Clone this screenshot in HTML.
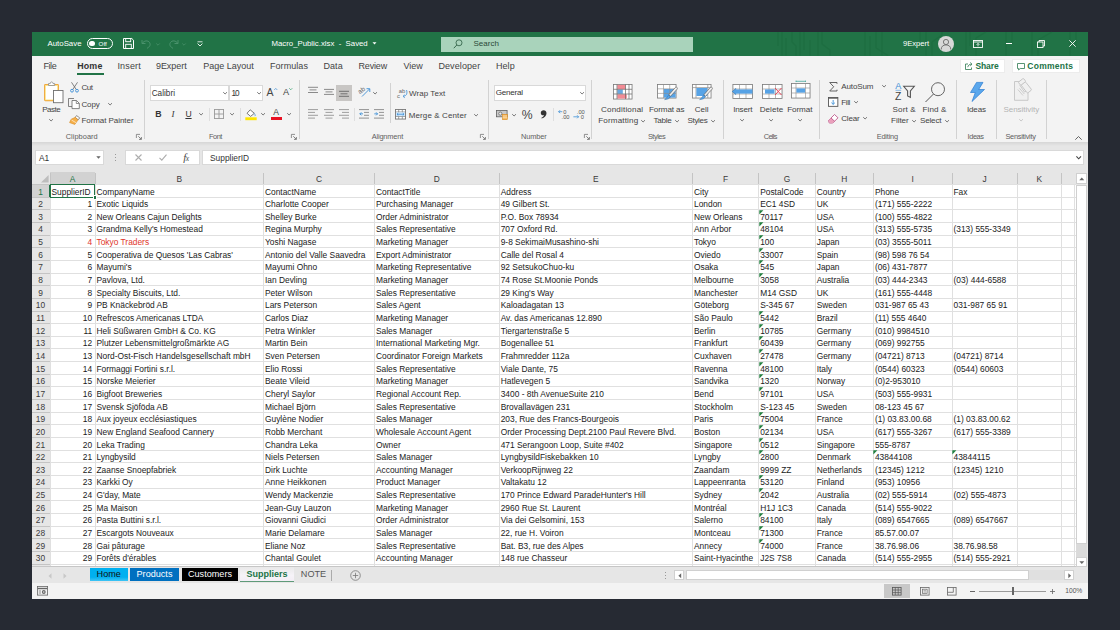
<!DOCTYPE html>
<html><head><meta charset="utf-8">
<style>
*{margin:0;padding:0}
html,body{width:1120px;height:630px;overflow:hidden;background:#262a33;font-family:"Liberation Sans",sans-serif;}
.abs{position:absolute}
.t{position:absolute;white-space:nowrap;color:#444;font-size:8px;line-height:10px;height:10px;transform:translateY(-5px)}
.tc{position:absolute;white-space:nowrap;color:#444;font-size:8px;line-height:10px;height:10px;text-align:center;transform:translate(-50%,-5px)}
.c{white-space:nowrap;color:#1a1a1a;font-size:8.4px}
.ch{text-align:center;font-size:8.4px;line-height:14.4px;color:#444}
.rh{text-align:center;font-size:8.4px;color:#444}
.sep{position:absolute;width:1px;background:#d4d4d4;top:84px;height:56px}
.lbl{position:absolute;white-space:nowrap;color:#5e5e5e;font-size:7.6px;line-height:10px;height:10px;text-align:center;transform:translate(-50%,-5px);top:137.3px}
.tab{position:absolute;white-space:nowrap;color:#444;font-size:9.1px;line-height:12px;height:12px;top:60px}
.box{position:absolute;background:#fff;border:0.6px solid #d9d9d9;box-sizing:border-box}
svg{position:absolute;overflow:visible}
</style></head><body>
<!-- window -->
<div class="abs" style="left:32px;top:32px;width:1056px;height:566.5px;background:#f3f3f3"></div>
<!-- title bar -->
<div class="abs" id="title" style="left:32px;top:32px;width:1056px;height:23.5px;background:#217346"></div>
<svg style="left:770px;top:32px" width="318" height="23.5" viewBox="0 0 318 23.5" id="circ"><g stroke="#1b6a3d" stroke-width="1.2" fill="none" opacity="0.5"><path d="M8 0V14"/><path d="M12 0V23.5"/><path d="M16 6V23.5"/><path d="M22 0V10"/><path d="M30 0V23.5"/><path d="M34 0V18"/><path d="M40 8V23.5"/><path d="M48 0V23.5"/><path d="M52 0V12"/><path d="M95 0V23.5"/><path d="M100 4V23.5"/><path d="M106 0V16"/><path d="M112 0V23.5"/><path d="M150 0V9"/><path d="M156 0V23.5"/><path d="M162 10V23.5"/><path d="M196 0V23.5"/><path d="M200 0V14"/><path d="M206 6V23.5"/><path d="M236 0V23.5"/><path d="M242 0V12"/><path d="M262 0V23.5"/><path d="M268 8V23.5"/><path d="M300 0V23.5"/><path d="M306 0V15"/><path d="M52 12L60 18V23.5M106 16L118 23.5M162 10L172 3V0M206 6L216 0M268 8L282 0M22 10L26 14V23.5"/></g></svg>
<div class="t" style="left:47.5px;top:43.7px;color:#fff;font-size:7.85px">AutoSave</div>
<div class="abs" style="left:86.5px;top:38px;width:26.5px;height:11px;border:0.8px solid #fff;border-radius:6px;box-sizing:border-box"></div>
<div class="abs" style="left:89.3px;top:40.7px;width:5.6px;height:5.6px;border-radius:3px;background:#fff"></div>
<div class="t" style="left:98.6px;top:43.7px;color:#fff;font-size:6.2px">Off</div>
<!-- save icon -->
<svg style="left:122.5px;top:38px" width="11" height="11" viewBox="0 0 11 11"><path d="M0.5 0.5h8.3l1.7 1.7v8.3h-10z" fill="none" stroke="#fff" stroke-width="1"/><rect x="2.7" y="0.5" width="5" height="3.2" fill="none" stroke="#fff" stroke-width="0.9"/><rect x="2.7" y="6.3" width="5.6" height="4.2" fill="none" stroke="#fff" stroke-width="0.9"/></svg>
<!-- undo/redo (dim) -->
<svg style="left:141px;top:38.5px" width="12" height="10" viewBox="0 0 12 10"><path d="M1 1v3.5h3.5M1.3 4.3C3 1.5 7 1 8.6 3.6 10 6 8.5 8 6 9.3" fill="none" stroke="#4f9570" stroke-width="0.9"/></svg>
<svg style="left:155.5px;top:42.5px" width="4" height="3" viewBox="0 0 4 3"><path d="M0.3 0.5L2 2.2 3.7 0.5" fill="none" stroke="#4f9570" stroke-width="0.7"/></svg>
<svg style="left:167px;top:38.5px" width="12" height="10" viewBox="0 0 12 10"><path d="M11 1v3.5H7.5M10.7 4.3C9 1.5 5 1 3.4 3.6 2 6 3.5 8 6 9.3" fill="none" stroke="#4f9570" stroke-width="0.9"/></svg>
<svg style="left:181.5px;top:42.5px" width="4" height="3" viewBox="0 0 4 3"><path d="M0.3 0.5L2 2.2 3.7 0.5" fill="none" stroke="#4f9570" stroke-width="0.7"/></svg>
<svg style="left:196.5px;top:41px" width="6" height="6" viewBox="0 0 6 6"><path d="M0.5 0.8h5" stroke="#fff" stroke-width="0.8"/><path d="M0.6 2.6L3 5 5.4 2.6" fill="none" stroke="#fff" stroke-width="0.9"/></svg>
<div class="t" style="left:271.5px;top:43.8px;color:#fff;font-size:7.8px">Macro_Public.xlsx&nbsp; -&nbsp; Saved</div>
<svg style="left:371.5px;top:42.2px" width="5" height="3" viewBox="0 0 5 3"><path d="M0.5 0.3h4L2.5 2.6z" fill="#fff"/></svg>
<!-- search -->
<div class="abs" style="left:440.5px;top:36.5px;width:252px;height:15px;background:#a9d3bb"></div>
<svg style="left:453px;top:38.5px" width="10" height="10" viewBox="0 0 10 10"><circle cx="6" cy="3.8" r="3" fill="none" stroke="#2b5c41" stroke-width="0.8"/><path d="M3.8 6L0.8 9.2" stroke="#2b5c41" stroke-width="0.9"/></svg>
<div class="t" style="left:473.5px;top:43.7px;color:#2b4a39;font-size:8px">Search</div>
<div class="t" style="left:903px;top:43.7px;color:#fff;font-size:7.6px">9Expert</div>
<div class="abs" style="left:938px;top:35.5px;width:16px;height:16px;border-radius:8px;background:#d8d8d8;overflow:hidden"></div>
<svg style="left:938px;top:35.5px" width="16" height="16" viewBox="0 0 16 16"><circle cx="8" cy="6" r="2.6" fill="none" stroke="#6b6b6b" stroke-width="0.9"/><path d="M3.2 13.5c0-3 2-4.6 4.8-4.6s4.8 1.600 4.8 4.600" fill="none" stroke="#6b6b6b" stroke-width="0.9"/></svg>
<svg style="left:972.5px;top:39.5px" width="10" height="8" viewBox="0 0 10 8"><rect x="0.5" y="0.5" width="9" height="7" fill="none" stroke="#fff" stroke-width="0.9"/><path d="M0.5 2h9" stroke="#fff" stroke-width="0.9"/><path d="M5 6.300V3.600M3.600 4.800L5 3.400 6.400 4.800" fill="none" stroke="#fff" stroke-width="0.8"/></svg>
<div class="abs" style="left:1006px;top:43.4px;width:6px;height:0.9px;background:#fff"></div>
<svg style="left:1036.5px;top:40px" width="8" height="8" viewBox="0 0 8 8"><rect x="0.5" y="2" width="5.5" height="5.5" fill="none" stroke="#fff" stroke-width="0.9"/><path d="M2 2V0.500h5.500v5.500H6" fill="none" stroke="#fff" stroke-width="0.9"/></svg>
<svg style="left:1068.5px;top:40px" width="7" height="7" viewBox="0 0 7 7"><path d="M0.300 0.300L6.700 6.700M6.700 0.300L0.300 6.700" stroke="#fff" stroke-width="0.9"/></svg>

<!-- tab row -->
<div class="tab" style="left:43.45px;font-size:9.0px;letter-spacing:-0.418px;">File</div>
<div class="tab" style="left:77.20px;font-size:8.9px;letter-spacing:0.174px;font-weight:bold;color:#333;">Home</div>
<div class="tab" style="left:117.45px;font-size:9.0px;letter-spacing:0.148px;">Insert</div>
<div class="tab" style="left:155.95px;font-size:9.0px;letter-spacing:-0.045px;">9Expert</div>
<div class="tab" style="left:203.20px;font-size:9.0px;letter-spacing:-0.004px;">Page Layout</div>
<div class="tab" style="left:269.95px;font-size:9.0px;letter-spacing:0.070px;">Formulas</div>
<div class="tab" style="left:323.45px;font-size:9.0px;letter-spacing:0.080px;">Data</div>
<div class="tab" style="left:358.45px;font-size:9.0px;letter-spacing:-0.152px;">Review</div>
<div class="tab" style="left:403.45px;font-size:9.0px;letter-spacing:-0.032px;">View</div>
<div class="tab" style="left:438.45px;font-size:9.0px;letter-spacing:0.091px;">Developer</div>
<div class="tab" style="left:495.95px;font-size:9.0px;letter-spacing:0.080px;">Help</div>
<div class="abs" style="left:77px;top:73.2px;width:26.7px;height:1.8px;background:#217346"></div>
<div class="abs" style="left:960px;top:59px;width:45px;height:14px;background:#fff;border:0.500px solid #ececec;box-sizing:border-box"></div>
<svg style="left:964.500px;top:62px" width="8" height="8" viewBox="0 0 8 8"><path d="M3 2H0.500v5.500h6V5.500" fill="none" stroke="#2d7a50" stroke-width="0.800"/><path d="M2.800 5.200C3 3.200 4.500 2.200 6.800 2.200M5.200 0.500L7 2.200 5.200 3.900" fill="none" stroke="#2d7a50" stroke-width="0.800"/></svg>
<div class="tab" style="left:975.4px;top:60.2px;font-size:8.5px;font-weight:bold;color:#217346;letter-spacing:-0.081px">Share</div>
<div class="abs" style="left:1011.500px;top:59px;width:68px;height:14px;background:#fff;border:0.500px solid #ececec;box-sizing:border-box"></div>
<svg style="left:1016.500px;top:62.500px" width="8" height="8" viewBox="0 0 8 8"><path d="M0.500 0.500h7v5H3.200L1.600 7V5.500H0.500z" fill="none" stroke="#2d7a50" stroke-width="0.800"/></svg>
<div class="tab" style="left:1027.3px;top:60.2px;font-size:8.5px;font-weight:bold;color:#217346;letter-spacing:0.268px">Comments</div>

<svg style="left:44px;top:80.5px" width="20" height="22.5" viewBox="0 0 20 22.5">
<rect x="0.6" y="3.6" width="13.8" height="16" rx="0.8" fill="#fff" stroke="#f0a53a" stroke-width="1.1"/>
<rect x="1.3" y="4.3" width="12.4" height="14.6" fill="none" stroke="#fbe27a" stroke-width="0.7"/>
<path d="M4.5 4.5V2.6h1.7c0-2.2 2.800-2.200 2.800 0h1.700v1.900z" fill="#fff" stroke="#8a8a8a" stroke-width="0.8"/>
<rect x="9.5" y="9.5" width="9.5" height="12.200" fill="#fff" stroke="#707070" stroke-width="0.9"/>
</svg>
<div class="t" style="left:42.30px;top:109.6px;font-size:8.0px;color:#444;letter-spacing:-0.514px;">Paste</div>
<svg style="left:49.30px;top:118.70px" width="4.2" height="2.2" viewBox="0 0 4.2 2.2"><path d="M0.2 0.2L2.1 2.0 4.0 0.2" fill="none" stroke="#555" stroke-width="0.8"/></svg>
<svg style="left:69.500px;top:82px" width="9" height="10.500" viewBox="0 0 9 10.500">
<path d="M1.500 0.300L6.300 7.600M7.500 0.300L2.700 7.600" stroke="#666" stroke-width="0.800" fill="none"/>
<circle cx="2" cy="8.700" r="1.400" fill="none" stroke="#3c8fd6" stroke-width="0.900"/><circle cx="7" cy="8.700" r="1.400" fill="none" stroke="#3c8fd6" stroke-width="0.900"/></svg>
<div class="t" style="left:81.45px;top:87.6px;font-size:8.0px;color:#444;letter-spacing:-0.475px;">Cut</div>
<svg style="left:68px;top:98px" width="12" height="11" viewBox="0 0 12 11">
<path d="M4 8.500H0.500V0.500h5.500" fill="none" stroke="#666" stroke-width="0.800"/>
<path d="M4 2.500h4.500l2.800 2.800v5.300H4z" fill="#fff" stroke="#666" stroke-width="0.800"/>
<path d="M8.300 2.700v2.800h2.800" fill="none" stroke="#666" stroke-width="0.700"/></svg>
<div class="t" style="left:81.45px;top:104.7px;font-size:8.0px;color:#444;letter-spacing:-0.142px;">Copy</div>
<svg style="left:107.70px;top:103.10px" width="4.2" height="2.2" viewBox="0 0 4.2 2.2"><path d="M0.2 0.2L2.1 2.0 4.0 0.2" fill="none" stroke="#555" stroke-width="0.8"/></svg>
<svg style="left:68.500px;top:114.500px" width="11.500" height="10" viewBox="0 0 11.500 10">
<path d="M7.500 0.600l3.200 2.200-1.400 2-3.200-2.200z" fill="#fff" stroke="#666" stroke-width="0.700"/>
<path d="M6.500 2.300L2.200 4.200 0.600 7.600l5.200 1.800 2-2.800 1-1.700z" fill="#f5b04a" stroke="#d98a1f" stroke-width="0.600"/>
<path d="M2.500 5l4.500 2.700" stroke="#fff" stroke-width="0.600"/></svg>
<div class="t" style="left:81.45px;top:121.1px;font-size:8.0px;color:#444;letter-spacing:-0.058px;">Format Painter</div>
<div class="t" style="left:65.70px;top:137.3px;font-size:7.4px;color:#5e5e5e;letter-spacing:0.041px">Clipboard</div>
<svg style="left:136.3px;top:134px" width="6" height="6" viewBox="0 0 6 6"><path d="M0.4 4V0.4H4" fill="none" stroke="#666" stroke-width="0.7"/><path d="M2.3 2.3L5.2 5.2M5.4 3V5.4H3" fill="none" stroke="#666" stroke-width="0.8"/></svg>
<div class="abs" style="left:144.0px;top:80px;width:1px;height:58.5px;background:#d2d2d2"></div>
<div class="box" style="left:150.2px;top:85.2px;width:79px;height:15.500px"></div>
<div class="box" style="left:229.4px;top:85.2px;width:34px;height:15.500px"></div>
<div class="t" style="left:151.70px;top:93.7px;font-size:8.2px;color:#333;letter-spacing:0.010px;">Calibri</div>
<svg style="left:222.80px;top:92.20px" width="4.2" height="2.2" viewBox="0 0 4.2 2.2"><path d="M0.2 0.2L2.1 2.0 4.0 0.2" fill="none" stroke="#555" stroke-width="0.8"/></svg>
<div class="t" style="left:231.40px;top:93.7px;font-size:8.2px;color:#333;letter-spacing:-0.921px;">10</div>
<svg style="left:256.80px;top:92.20px" width="4.2" height="2.2" viewBox="0 0 4.2 2.2"><path d="M0.2 0.2L2.1 2.0 4.0 0.2" fill="none" stroke="#555" stroke-width="0.8"/></svg>
<div class="t" style="left:266.5px;top:91.8px;font-size:10.5px;color:#444;">A</div>
<svg style="left:273.5px;top:87.5px" width="3.5" height="2.2" viewBox="0 0 3.5 2.2"><path d="M0.2 2L1.750 0.400 3.300 2" fill="none" stroke="#3c8fd6" stroke-width="0.700"/></svg>
<div class="t" style="left:283px;top:92.3px;font-size:9.2px;color:#444;">A</div>
<svg style="left:289px;top:87.5px" width="3.5" height="2.2" viewBox="0 0 3.5 2.2"><path d="M0.2 0.200L1.750 1.800 3.300 0.200" fill="none" stroke="#2e9e6b" stroke-width="0.700"/></svg>
<div class="t" style="left:155.2px;top:114.1px;font-size:8.8px;color:#333;font-weight:bold">B</div>
<div class="t" style="left:171.6px;top:114.1px;font-size:9px;color:#333;font-family:'Liberation Serif',serif;font-style:italic;">I</div>
<div class="t" style="left:185.4px;top:113.9px;font-size:8.6px;color:#333;text-decoration:underline;text-underline-offset:1.2px;text-decoration-thickness:0.700px">U</div>
<svg style="left:198.90px;top:113.20px" width="4.2" height="2.2" viewBox="0 0 4.2 2.2"><path d="M0.2 0.2L2.1 2.0 4.0 0.2" fill="none" stroke="#555" stroke-width="0.8"/></svg>
<div class="abs" style="left:208.8px;top:108px;width:1px;height:13px;background:#dedede"></div>
<svg style="left:214.300px;top:109px" width="10" height="10" viewBox="0 0 10 10"><rect x="0.450" y="0.450" width="9.100" height="9.100" fill="none" stroke="#9a9a9a" stroke-width="0.900"/><path d="M5 0.500V9.500M0.500 5H9.500" stroke="#9a9a9a" stroke-width="0.900"/></svg>
<svg style="left:229.60px;top:113.20px" width="4.2" height="2.2" viewBox="0 0 4.2 2.2"><path d="M0.2 0.2L2.1 2.0 4.0 0.2" fill="none" stroke="#555" stroke-width="0.8"/></svg>
<div class="abs" style="left:239.8px;top:108px;width:1px;height:13px;background:#dedede"></div>
<svg style="left:244.500px;top:108.500px" width="12" height="11.500" viewBox="0 0 12 11.500">
<path d="M5.200 0.800L9.300 4.300 5.600 7.400 2 4.300z" fill="#fff" stroke="#555" stroke-width="0.800"/>
<path d="M9.300 4.500c0.900 1.200 1.200 2 0.600 2.600" fill="none" stroke="#3c8fd6" stroke-width="0.800"/>
<rect x="0.300" y="8.300" width="11.400" height="2.900" fill="#ffe600"/></svg>
<svg style="left:260.60px;top:113.20px" width="4.2" height="2.2" viewBox="0 0 4.2 2.2"><path d="M0.2 0.2L2.1 2.0 4.0 0.2" fill="none" stroke="#555" stroke-width="0.8"/></svg>
<div class="tc" style="left:276.2px;top:112.3px;font-size:8.6px;color:#444;">A</div>
<div class="abs" style="left:270.700px;top:116.800px;width:11px;height:2.900px;background:#e81123"></div>
<svg style="left:286.50px;top:113.20px" width="4.2" height="2.2" viewBox="0 0 4.2 2.2"><path d="M0.2 0.2L2.1 2.0 4.0 0.2" fill="none" stroke="#555" stroke-width="0.8"/></svg>
<div class="t" style="left:209.00px;top:137.3px;font-size:7.4px;color:#5e5e5e;letter-spacing:-0.469px">Font</div>
<svg style="left:291.3px;top:134px" width="6" height="6" viewBox="0 0 6 6"><path d="M0.4 4V0.4H4" fill="none" stroke="#666" stroke-width="0.7"/><path d="M2.3 2.3L5.2 5.2M5.4 3V5.4H3" fill="none" stroke="#666" stroke-width="0.8"/></svg>
<div class="abs" style="left:299.1px;top:80px;width:1px;height:58.5px;background:#d2d2d2"></div>
<svg style="left:308px;top:85px" width="10" height="12" viewBox="0 0 10 12"><path d="M0 2.3H10" stroke="#6e6e6e" stroke-width="0.8"/><path d="M1.5 4.9H8.5" stroke="#6e6e6e" stroke-width="0.8"/><path d="M0 7.5H10" stroke="#6e6e6e" stroke-width="0.8"/></svg>
<svg style="left:323.7px;top:85px" width="10" height="12" viewBox="0 0 10 12"><path d="M0 4.4H10" stroke="#6e6e6e" stroke-width="0.8"/><path d="M1.5 6.9H8.5" stroke="#6e6e6e" stroke-width="0.8"/><path d="M0 9.4H10" stroke="#6e6e6e" stroke-width="0.8"/></svg>
<div class="abs" style="left:336.200px;top:85px;width:15.600px;height:15.600px;background:#c8c6c4"></div>
<svg style="left:339px;top:85px" width="10" height="12" viewBox="0 0 10 12"><path d="M0 6.3H10" stroke="#5a5a5a" stroke-width="0.8"/><path d="M1.5 8.8H8.5" stroke="#5a5a5a" stroke-width="0.8"/><path d="M0 11.3H10" stroke="#5a5a5a" stroke-width="0.8"/></svg>
<svg style="left:359px;top:86px" width="11.500" height="11" viewBox="0 0 11.500 11">
<text x="0" y="6.500" font-size="6.500" fill="#666" font-family="Liberation Sans" transform="rotate(-35 3 6)">ab</text>
<path d="M3 10.500L10.500 3M10.800 6V2.700H7.500" fill="none" stroke="#3c8fd6" stroke-width="0.900"/></svg>
<svg style="left:372.90px;top:92.20px" width="4.2" height="2.2" viewBox="0 0 4.2 2.2"><path d="M0.2 0.2L2.1 2.0 4.0 0.2" fill="none" stroke="#555" stroke-width="0.8"/></svg>
<div class="abs" style="left:390.2px;top:83px;width:1px;height:40px;background:#d2d2d2"></div>
<svg style="left:397px;top:87.500px" width="10.500" height="11" viewBox="0 0 10.500 11">
<text x="1.800" y="4.800" font-size="5.800" fill="#666" font-family="Liberation Sans">ab</text>
<text x="0" y="10.300" font-size="5.800" fill="#666" font-family="Liberation Sans">c</text>
<path d="M8.800 1v0M9.500 2c1 2.500 0.500 6-3 6.200M7.800 6.800L6 8.300 7.800 9.800" fill="none" stroke="#3c8fd6" stroke-width="0.800"/></svg>
<div class="t" style="left:409.00px;top:93.7px;font-size:8.0px;color:#444;letter-spacing:0.060px;">Wrap Text</div>
<svg style="left:308px;top:106.9px" width="10" height="12" viewBox="0 0 10 12"><path d="M0 2.6H10" stroke="#888" stroke-width="0.8"/><path d="M0 5.4H7" stroke="#888" stroke-width="0.8"/><path d="M0 8.3H10" stroke="#888" stroke-width="0.8"/><path d="M0 11.1H7" stroke="#888" stroke-width="0.8"/></svg>
<svg style="left:323.7px;top:106.9px" width="10" height="12" viewBox="0 0 10 12"><path d="M0 2.6H10" stroke="#888" stroke-width="0.8"/><path d="M1.5 5.4H8.5" stroke="#888" stroke-width="0.8"/><path d="M0 8.3H10" stroke="#888" stroke-width="0.8"/><path d="M1.5 11.1H8.5" stroke="#888" stroke-width="0.8"/></svg>
<svg style="left:339px;top:106.9px" width="10" height="12" viewBox="0 0 10 12"><path d="M0 2.6H10" stroke="#888" stroke-width="0.8"/><path d="M3 5.4H10" stroke="#888" stroke-width="0.8"/><path d="M0 8.3H10" stroke="#888" stroke-width="0.8"/><path d="M3 11.1H10" stroke="#888" stroke-width="0.8"/></svg>
<div class="abs" style="left:353.5px;top:108px;width:1px;height:13px;background:#dedede"></div>
<svg style="left:359.300px;top:106.9px" width="10" height="12" viewBox="0 0 10 12"><path d="M0 2.600H10M5 5.400H10M5 8.300H10M0 11.100H10" stroke="#888" stroke-width="0.900"/><path d="M4 6.85H0.800M2.300 5.35L0.800 6.85 2.300 8.35" fill="none" stroke="#3c8fd6" stroke-width="0.900"/></svg>
<svg style="left:374.300px;top:106.9px" width="10" height="12" viewBox="0 0 10 12"><path d="M0 2.600H10M5 5.400H10M5 8.300H10M0 11.100H10" stroke="#888" stroke-width="0.900"/><path d="M0.300 6.85H3.600M2.100 5.35L3.600 6.85 2.100 8.35" fill="none" stroke="#3c8fd6" stroke-width="0.900"/></svg>
<svg style="left:395px;top:109px" width="11" height="10.500" viewBox="0 0 11 10.500">
<rect x="0.450" y="0.450" width="10.100" height="9.600" fill="#fff" stroke="#777" stroke-width="0.900"/>
<path d="M0.500 3H10.500M0.500 7.500H10.500M3.700 0.500V3M7.300 0.500V3M3.700 7.500V10M7.300 7.500V10" stroke="#777" stroke-width="0.700"/>
<rect x="1" y="3.400" width="9" height="3.700" fill="#cfe6fa"/>
<path d="M2 5.250H9M3.300 4L2 5.250 3.300 6.500M7.700 4L9 5.250 7.700 6.500" fill="none" stroke="#3c8fd6" stroke-width="0.800"/></svg>
<div class="t" style="left:408.70px;top:116px;font-size:8.0px;color:#444;letter-spacing:0.118px;">Merge &amp; Center</div>
<svg style="left:474.30px;top:114.10px" width="4.2" height="2.2" viewBox="0 0 4.2 2.2"><path d="M0.2 0.2L2.1 2.0 4.0 0.2" fill="none" stroke="#555" stroke-width="0.8"/></svg>
<div class="t" style="left:371.70px;top:137.3px;font-size:7.4px;color:#5e5e5e;letter-spacing:-0.163px">Alignment</div>
<svg style="left:480.4px;top:134px" width="6" height="6" viewBox="0 0 6 6"><path d="M0.4 4V0.4H4" fill="none" stroke="#666" stroke-width="0.7"/><path d="M2.3 2.3L5.2 5.2M5.4 3V5.4H3" fill="none" stroke="#666" stroke-width="0.8"/></svg>
<div class="abs" style="left:487.9px;top:80px;width:1px;height:58.5px;background:#d2d2d2"></div>
<div class="box" style="left:494px;top:85.4px;width:92px;height:15.200px"></div>
<div class="t" style="left:495.70px;top:93.3px;font-size:8.1px;color:#333;letter-spacing:-0.220px;">General</div>
<svg style="left:579.90px;top:92.20px" width="4.2" height="2.2" viewBox="0 0 4.2 2.2"><path d="M0.2 0.2L2.1 2.0 4.0 0.2" fill="none" stroke="#555" stroke-width="0.8"/></svg>
<svg style="left:496px;top:110.300px" width="11.500" height="10" viewBox="0 0 11.500 10">
<rect x="0.400" y="0.400" width="10.700" height="6.400" fill="#c9c9c9" stroke="#606060" stroke-width="0.800"/>
<circle cx="4.300" cy="3.600" r="1.600" fill="#e8e8e8" stroke="#606060" stroke-width="0.700"/>
<rect x="6.300" y="4.300" width="5" height="5.300" fill="#f5b04a" stroke="#d98a1f" stroke-width="0.600"/>
<path d="M6.600 6H11M6.600 7.800H11" stroke="#fff" stroke-width="0.600"/></svg>
<svg style="left:511.80px;top:114.10px" width="4.2" height="2.2" viewBox="0 0 4.2 2.2"><path d="M0.2 0.2L2.1 2.0 4.0 0.2" fill="none" stroke="#555" stroke-width="0.8"/></svg>
<div class="t" style="left:521.8px;top:114.6px;font-size:12.2px;color:#444;">%</div>
<svg style="left:540px;top:110.3px" width="7" height="9" viewBox="0 0 7 9"><path d="M3.6 0.3c1.700 0 2.900 1.300 2.900 3 0 2.600-2 4.600-4.800 5.300l-0.300-0.800c1.500-0.600 2.500-1.500 2.700-2.700-0.300 0.100-0.600 0.200-1 0.200-1.300 0-2.300-1-2.300-2.400 0-1.500 1.200-2.600 2.800-2.600z" fill="#333"/></svg>
<div class="abs" style="left:552.5px;top:108px;width:1px;height:13px;background:#dedede"></div>
<svg style="left:557.800px;top:109px" width="11" height="11" viewBox="0 0 11 11">
<text x="5.300" y="4.600" font-size="5.700" fill="#555" font-family="Liberation Sans">0</text>
<text x="3.600" y="10.200" font-size="5.700" fill="#555" font-family="Liberation Sans">.00</text>
<path d="M4.300 2.700H0.600M2.100 1.200L0.600 2.700 2.100 4.200" fill="none" stroke="#3c8fd6" stroke-width="0.800"/></svg>
<svg style="left:572.800px;top:109px" width="11.500" height="11" viewBox="0 0 11.500 11">
<text x="3.800" y="4.600" font-size="5.700" fill="#555" font-family="Liberation Sans">.00</text>
<text x="7.800" y="10.200" font-size="5.700" fill="#555" font-family="Liberation Sans">0</text>
<path d="M0.400 7.800H5.600M4.100 6.300L5.600 7.800 4.100 9.300" fill="none" stroke="#3c8fd6" stroke-width="0.800"/></svg>
<div class="t" style="left:521.10px;top:137.3px;font-size:7.4px;color:#5e5e5e;letter-spacing:-0.144px">Number</div>
<svg style="left:583.6px;top:134px" width="6" height="6" viewBox="0 0 6 6"><path d="M0.4 4V0.4H4" fill="none" stroke="#666" stroke-width="0.7"/><path d="M2.3 2.3L5.2 5.2M5.4 3V5.4H3" fill="none" stroke="#666" stroke-width="0.8"/></svg>
<div class="abs" style="left:591.1px;top:80px;width:1px;height:58.5px;background:#d2d2d2"></div>
<svg style="left:613px;top:83.500px" width="19.500" height="15.500" viewBox="0 0 19.500 15.500">
<rect x="0.450" y="0.450" width="18.600" height="14.600" fill="#fff" stroke="#787878" stroke-width="0.800"/>
<rect x="4.300" y="0.900" width="8.2" height="4.200" fill="#f28b94"/><rect x="4.300" y="5.600" width="5.500" height="4.200" fill="#6aa8e0"/><rect x="4.300" y="10.300" width="9.500" height="4.300" fill="#f28b94"/>
<path d="M0.500 5.300H19M0.500 10H19M4 0.500V15M12.500 0.500V15M16 0.500V15" stroke="#666" stroke-width="0.700"/></svg>
<div class="t" style="left:601.00px;top:109.5px;font-size:8.1px;color:#444;letter-spacing:0.167px;">Conditional</div>
<div class="t" style="left:598.20px;top:120.8px;font-size:8.1px;color:#444;letter-spacing:0.143px;">Formatting</div>
<svg style="left:640.90px;top:119.70px" width="4.2" height="2.2" viewBox="0 0 4.2 2.2"><path d="M0.2 0.2L2.1 2.0 4.0 0.2" fill="none" stroke="#555" stroke-width="0.8"/></svg>
<svg style="left:656.800px;top:83.500px" width="21" height="16.500" viewBox="0 0 21 16.500">
<rect x="0.450" y="0.450" width="18.600" height="13.600" fill="#fff" stroke="#787878" stroke-width="0.800"/>
<rect x="6.800" y="5" width="11.800" height="8.600" fill="#57a3e6"/>
<path d="M0.500 4.800H19M0.500 9.400H19M6.500 0.500V14M12.700 0.500V14" stroke="#8c8c8c" stroke-width="0.600"/>
<path d="M19.800 3.300c0.800 0.600 0.800 1.400 0.200 2l-6.500 7-1.700-1.400 6.300-7.200c0.500-0.600 1.100-0.800 1.700-0.400z" fill="#eee" stroke="#666" stroke-width="0.700"/>
<path d="M11.600 11.200l1.800 1.400c-0.800 2-3 3-5.800 3 1.600-0.800 2.400-2.600 4-4.400z" fill="#57a3e6" stroke="#2f6fa8" stroke-width="0.500"/></svg>
<div class="t" style="left:649.00px;top:109.7px;font-size:8.1px;color:#444;letter-spacing:-0.120px;">Format as</div>
<div class="t" style="left:653.50px;top:120.6px;font-size:8.1px;color:#444;letter-spacing:-0.291px;">Table</div>
<svg style="left:675.20px;top:119.70px" width="4.2" height="2.2" viewBox="0 0 4.2 2.2"><path d="M0.2 0.2L2.1 2.0 4.0 0.2" fill="none" stroke="#555" stroke-width="0.8"/></svg>
<svg style="left:692px;top:83.500px" width="21" height="16.500" viewBox="0 0 21 16.500">
<rect x="0.450" y="0.450" width="18.600" height="13.600" fill="#fff" stroke="#8a8a8a" stroke-width="0.900"/>
<path d="M0.500 3.600H19M4 0.500V14M15.800 0.500V14" stroke="#8a8a8a" stroke-width="0.700"/>
<rect x="4.400" y="4" width="11" height="8" fill="#57a3e6"/>
<path d="M19.800 3.300c0.800 0.600 0.800 1.400 0.200 2l-6.500 7-1.700-1.400 6.300-7.200c0.500-0.600 1.100-0.800 1.700-0.400z" fill="#eee" stroke="#666" stroke-width="0.700"/>
<path d="M11.600 11.200l1.800 1.400c-0.800 2-3 3-5.800 3 1.600-0.800 2.400-2.600 4-4.400z" fill="#57a3e6" stroke="#2f6fa8" stroke-width="0.500"/></svg>
<div class="t" style="left:694.70px;top:109.7px;font-size:8.1px;color:#444;letter-spacing:-0.051px;">Cell</div>
<div class="t" style="left:687.50px;top:120.6px;font-size:8.1px;color:#444;letter-spacing:-0.372px;">Styles</div>
<svg style="left:710.90px;top:119.70px" width="4.2" height="2.2" viewBox="0 0 4.2 2.2"><path d="M0.2 0.2L2.1 2.0 4.0 0.2" fill="none" stroke="#555" stroke-width="0.8"/></svg>
<div class="t" style="left:647.90px;top:137.3px;font-size:7.4px;color:#5e5e5e;letter-spacing:-0.470px">Styles</div>
<div class="abs" style="left:722.7px;top:80px;width:1px;height:58.5px;background:#d2d2d2"></div>
<svg style="left:732.400px;top:83.500px" width="21.500" height="15" viewBox="0 0 21.500 15">
<rect x="0.900" y="0.450" width="19.600" height="14.100" fill="#fff" stroke="#787878" stroke-width="0.800"/>
<path d="M1 5H20.500M1 10H20.500M7.500 0.500V14.500M14 0.500V14.500" stroke="#8c8c8c" stroke-width="0.600"/>
<rect x="3.500" y="5.400" width="17" height="4.200" fill="#57a3e6"/>
<path d="M0.200 7.500L4.200 4.300V10.700z" fill="#57a3e6"/><path d="M4 4.300L0.300 7.500 4 10.700" fill="none" stroke="#2f6fa8" stroke-width="0.600"/></svg>
<div class="t" style="left:733.20px;top:109.6px;font-size:8.1px;color:#444;letter-spacing:-0.192px;">Insert</div>
<svg style="left:740.40px;top:118.60px" width="4.2" height="2.2" viewBox="0 0 4.2 2.2"><path d="M0.2 0.2L2.1 2.0 4.0 0.2" fill="none" stroke="#555" stroke-width="0.8"/></svg>
<svg style="left:761.800px;top:83.500px" width="20.500" height="15" viewBox="0 0 20.500 15">
<rect x="0.450" y="0.450" width="19.600" height="14.100" fill="#fff" stroke="#787878" stroke-width="0.800"/>
<path d="M0.500 5H20M0.500 10H20M7 0.500V14.500M13.500 0.500V14.500" stroke="#8c8c8c" stroke-width="0.600"/>
<rect x="3" y="5.400" width="9.500" height="4.200" fill="#57a3e6"/>
<path d="M13 4L19.500 11M19.500 4L13 11" stroke="#e8475a" stroke-width="1"/></svg>
<div class="t" style="left:759.70px;top:109.6px;font-size:8.1px;color:#444;letter-spacing:0.037px;">Delete</div>
<svg style="left:769.30px;top:118.60px" width="4.2" height="2.2" viewBox="0 0 4.2 2.2"><path d="M0.2 0.2L2.1 2.0 4.0 0.2" fill="none" stroke="#555" stroke-width="0.8"/></svg>
<svg style="left:790.700px;top:80.300px" width="19.500" height="18.500" viewBox="0 0 19.500 18.500">
<path d="M5 1.300H14.500M5 0.600V2M14.500 0.600V2" stroke="#2e9e8f" stroke-width="0.700"/>
<rect x="0.450" y="3.450" width="18.600" height="14.600" fill="#fff" stroke="#787878" stroke-width="0.800"/>
<path d="M0.500 8H19M0.500 13H19M5 3.500V18M14.500 3.500V18" stroke="#8c8c8c" stroke-width="0.600"/>
<rect x="5.400" y="8.400" width="8.700" height="4.200" fill="#57a3e6"/></svg>
<div class="t" style="left:787.20px;top:109.6px;font-size:8.1px;color:#444;letter-spacing:-0.071px;">Format</div>
<svg style="left:797.90px;top:118.60px" width="4.2" height="2.2" viewBox="0 0 4.2 2.2"><path d="M0.2 0.2L2.1 2.0 4.0 0.2" fill="none" stroke="#555" stroke-width="0.8"/></svg>
<div class="t" style="left:763.70px;top:137.3px;font-size:7.4px;color:#5e5e5e;letter-spacing:-0.637px">Cells</div>
<div class="abs" style="left:819.1px;top:80px;width:1px;height:58.5px;background:#d2d2d2"></div>
<svg style="left:829px;top:81.500px" width="8.500" height="9.500" viewBox="0 0 8.500 9.500"><path d="M8 1.800V0.500H0.700L4.700 4.750 0.700 9H8V7.700" fill="none" stroke="#555" stroke-width="0.900"/></svg>
<div class="t" style="left:841.20px;top:86.8px;font-size:8px;color:#444;letter-spacing:-0.101px;">AutoSum</div>
<svg style="left:881.90px;top:85.30px" width="4.2" height="2.2" viewBox="0 0 4.2 2.2"><path d="M0.2 0.2L2.1 2.0 4.0 0.2" fill="none" stroke="#555" stroke-width="0.8"/></svg>
<svg style="left:828.300px;top:96.800px" width="10.300" height="9.800" viewBox="0 0 10.300 9.800"><rect x="0.450" y="0.450" width="9.400" height="8.900" fill="#fff" stroke="#555" stroke-width="0.900"/><path d="M0.500 1.200H9.800" stroke="#555" stroke-width="1"/><path d="M5.150 3V7.300M3.400 5.700L5.150 7.400 6.900 5.700" fill="none" stroke="#3c8fd6" stroke-width="0.900"/></svg>
<div class="t" style="left:841.20px;top:102.9px;font-size:8px;color:#444;letter-spacing:-0.340px;">Fill</div>
<svg style="left:853.90px;top:101.30px" width="4.2" height="2.2" viewBox="0 0 4.2 2.2"><path d="M0.2 0.2L2.1 2.0 4.0 0.2" fill="none" stroke="#555" stroke-width="0.8"/></svg>
<svg style="left:828.300px;top:113.500px" width="10.500" height="9.500" viewBox="0 0 10.500 9.500"><path d="M6.500 0.500L10 3.800 4.800 9 1.300 9 0.500 6.500z" fill="#fff" stroke="#b8457d" stroke-width="0.800"/><path d="M0.800 6.300L3.200 3.800 6.600 7.200 4.700 9H1.500z" fill="#eaa0bb"/><path d="M3 4L6.800 7.400" stroke="#b8457d" stroke-width="0.700"/></svg>
<div class="t" style="left:841.20px;top:119.2px;font-size:8px;color:#444;letter-spacing:-0.179px;">Clear</div>
<svg style="left:862.50px;top:117.30px" width="4.2" height="2.2" viewBox="0 0 4.2 2.2"><path d="M0.2 0.2L2.1 2.0 4.0 0.2" fill="none" stroke="#555" stroke-width="0.8"/></svg>
<svg style="left:894px;top:81px" width="21.500" height="20" viewBox="0 0 21.500 20">
<text x="1.200" y="8.300" font-size="9.200" fill="#3c8fd6" font-family="Liberation Sans">A</text>
<path d="M1.500 9.300H7.200" stroke="#3c8fd6" stroke-width="0.600"/>
<text x="1" y="19.500" font-size="11.500" fill="#444" font-family="Liberation Sans" transform="translate(0 0) scale(0.9 1)">Z</text>
<path d="M9.700 5.300H20.300L16.400 10V16.300L13.600 15V10z" fill="none" stroke="#555" stroke-width="1.100"/></svg>
<div class="t" style="left:892.60px;top:109.6px;font-size:8.1px;color:#444;letter-spacing:0.118px;">Sort &amp;</div>
<div class="t" style="left:891.10px;top:120.6px;font-size:8.1px;color:#444;letter-spacing:-0.080px;">Filter</div>
<svg style="left:911.80px;top:119.70px" width="4.2" height="2.2" viewBox="0 0 4.2 2.2"><path d="M0.2 0.2L2.1 2.0 4.0 0.2" fill="none" stroke="#555" stroke-width="0.8"/></svg>
<svg style="left:925px;top:81.500px" width="20.500" height="20.500" viewBox="0 0 20.500 20.500"><circle cx="13" cy="7.200" r="6.500" fill="none" stroke="#555" stroke-width="0.900"/><path d="M8.500 12L0.500 20" stroke="#555" stroke-width="1"/></svg>
<div class="t" style="left:922.60px;top:109.6px;font-size:8.1px;color:#444;letter-spacing:0.078px;">Find &amp;</div>
<div class="t" style="left:920.00px;top:120.6px;font-size:8.1px;color:#444;letter-spacing:-0.203px;">Select</div>
<svg style="left:944.60px;top:119.70px" width="4.2" height="2.2" viewBox="0 0 4.2 2.2"><path d="M0.2 0.2L2.1 2.0 4.0 0.2" fill="none" stroke="#555" stroke-width="0.8"/></svg>
<div class="t" style="left:876.70px;top:137.3px;font-size:7.4px;color:#5e5e5e;letter-spacing:-0.188px">Editing</div>
<div class="abs" style="left:956.0px;top:80px;width:1px;height:58.5px;background:#d2d2d2"></div>
<svg style="left:969.800px;top:81.500px" width="15" height="20" viewBox="0 0 15 20"><path d="M6.500 0.400H13L8.700 7.500H14.500L2 19.500 5.300 10.500H0.500z" fill="#5aa7ec" stroke="#2b7cd3" stroke-width="0.700"/></svg>
<div class="t" style="left:966.90px;top:109.6px;font-size:8.0px;color:#444;letter-spacing:-0.118px;">Ideas</div>
<div class="t" style="left:967.60px;top:137.3px;font-size:7.4px;color:#5e5e5e;letter-spacing:-0.426px">Ideas</div>
<div class="abs" style="left:996.2px;top:80px;width:1px;height:58.5px;background:#d2d2d2"></div>
<svg style="left:1013.800px;top:80.300px" width="18.500" height="21" viewBox="0 0 18.500 21"><path d="M0.500 1.500H8L6 5.500 10.500 12 14 10.300V20.300H0.500z" fill="#f0f0f0" stroke="#c4c4c4" stroke-width="0.900"/>
<g transform="rotate(-38 12 7)"><rect x="9.300" y="2.300" width="5.500" height="10.500" rx="1" fill="#f0f0f0" stroke="#c4c4c4" stroke-width="0.900"/><rect x="8.800" y="-1.500" width="6.500" height="4" rx="0.800" fill="#f0f0f0" stroke="#c4c4c4" stroke-width="0.900"/></g>
<path d="M3.800 9.500L9 15.500M5.500 8.300L10.300 14" stroke="#c4c4c4" stroke-width="0.800"/></svg>
<div class="t" style="left:1003.40px;top:109.6px;font-size:8.0px;color:#b4b4b4;letter-spacing:-0.011px;">Sensitivity</div>
<svg style="left:1019.10px;top:118.50px" width="4.2" height="2.2" viewBox="0 0 4.2 2.2"><path d="M0.2 0.2L2.1 2.0 4.0 0.2" fill="none" stroke="#bbb" stroke-width="0.8"/></svg>
<div class="t" style="left:1005.40px;top:137.3px;font-size:7.4px;color:#5e5e5e;letter-spacing:-0.271px">Sensitivity</div>
<div class="abs" style="left:1046.2px;top:80px;width:1px;height:58.5px;background:#d2d2d2"></div>
<svg style="left:1075.300px;top:135.800px" width="7" height="4" viewBox="0 0 7 4"><path d="M0.300 3.700L3.500 0.500 6.700 3.700" fill="none" stroke="#555" stroke-width="0.900"/></svg>

<!-- formula bar area -->
<div class="abs" style="left:32px;top:142px;width:1056px;height:30px;background:#e6e6e6"></div>
<div class="abs" style="left:32px;top:141.800px;width:1056px;height:4px;background:linear-gradient(#d6d6d6,#e6e6e6)"></div>
<div class="box" style="left:35.200px;top:149.500px;width:69.300px;height:15.600px"></div>
<div class="t" style="left:39px;top:157.700px;font-size:8.4px;color:#333">A1</div>
<svg style="left:96px;top:156px" width="5" height="3" viewBox="0 0 5 3"><path d="M0.300 0.300h4.400L2.500 2.700z" fill="#666"/></svg>
<div class="abs" style="left:114.500px;top:153.500px;width:1px;height:1px;background:#999;box-shadow:0 3px 0 #999,0 6px 0 #999"></div>
<div class="box" style="left:125px;top:149.500px;width:75px;height:15.600px"></div>
<svg style="left:134.500px;top:154px" width="7" height="7" viewBox="0 0 7 7"><path d="M0.500 0.500l6 6M6.500 0.500l-6 6" stroke="#adadad" stroke-width="1.100"/></svg>
<svg style="left:159px;top:154px" width="8" height="7" viewBox="0 0 8 7"><path d="M0.500 3.800L2.800 6.200 7.500 0.600" fill="none" stroke="#adadad" stroke-width="1.100"/></svg>
<div class="t" style="left:183.300px;top:156.800px;font-family:'Liberation Serif',serif;font-style:italic;font-size:11px;color:#4a4a4a">f<span style="font-size:7.500px;margin-left:-0.5px">x</span></div>
<div class="box" style="left:202px;top:149.500px;width:882.300px;height:15.600px"></div>
<div class="t" style="left:210px;top:157.700px;font-size:8.4px;color:#333">SupplierID</div>
<svg style="left:1076.2px;top:155.600px" width="5.4" height="3.4" viewBox="0 0 5.4 3.4"><path d="M0.400 0.400L2.700 2.800 5 0.400" fill="none" stroke="#444" stroke-width="1.1"/></svg>

<div class="abs" style="left:32px;top:172px;width:1044px;height:394.5px;background:#fff"></div>
<div class="abs" style="left:32px;top:172px;width:1044px;height:12.5px;background:#e6e6e6"></div>
<div class="abs" style="left:32px;top:172px;width:18px;height:394.5px;background:#e6e6e6"></div>
<div class="abs" style="left:50px;top:172px;width:45px;height:12.5px;background:#d2d2d2;border-bottom:1px solid #217346;box-sizing:border-box"></div>
<div class="abs" style="left:32px;top:184.5px;width:18px;height:12.65px;background:#d2d2d2;border-right:1px solid #217346;box-sizing:border-box"></div>
<svg class="abs" style="left:40.5px;top:175px" width="7.6" height="7.4"><path d="M7.6 0 L7.6 7.4 L0 7.4 Z" fill="#bdbdbd"/></svg>
<div class="abs" style="left:49.5px;top:184.5px;width:1px;height:382.0px;background:#e0e0e0"></div>
<div class="abs" style="left:49.5px;top:173px;width:1px;height:11.5px;background:#c4c4c4"></div>
<div class="abs" style="left:94.5px;top:184.5px;width:1px;height:382.0px;background:#e0e0e0"></div>
<div class="abs" style="left:94.5px;top:173px;width:1px;height:11.5px;background:#c4c4c4"></div>
<div class="abs" style="left:263.0px;top:184.5px;width:1px;height:382.0px;background:#e0e0e0"></div>
<div class="abs" style="left:263.0px;top:173px;width:1px;height:11.5px;background:#c4c4c4"></div>
<div class="abs" style="left:374.0px;top:184.5px;width:1px;height:382.0px;background:#e0e0e0"></div>
<div class="abs" style="left:374.0px;top:173px;width:1px;height:11.5px;background:#c4c4c4"></div>
<div class="abs" style="left:498.7px;top:184.5px;width:1px;height:382.0px;background:#e0e0e0"></div>
<div class="abs" style="left:498.7px;top:173px;width:1px;height:11.5px;background:#c4c4c4"></div>
<div class="abs" style="left:692.0px;top:184.5px;width:1px;height:382.0px;background:#e0e0e0"></div>
<div class="abs" style="left:692.0px;top:173px;width:1px;height:11.5px;background:#c4c4c4"></div>
<div class="abs" style="left:758.2px;top:184.5px;width:1px;height:382.0px;background:#e0e0e0"></div>
<div class="abs" style="left:758.2px;top:173px;width:1px;height:11.5px;background:#c4c4c4"></div>
<div class="abs" style="left:814.7px;top:184.5px;width:1px;height:382.0px;background:#e0e0e0"></div>
<div class="abs" style="left:814.7px;top:173px;width:1px;height:11.5px;background:#c4c4c4"></div>
<div class="abs" style="left:872.9px;top:184.5px;width:1px;height:382.0px;background:#e0e0e0"></div>
<div class="abs" style="left:872.9px;top:173px;width:1px;height:11.5px;background:#c4c4c4"></div>
<div class="abs" style="left:951.5px;top:184.5px;width:1px;height:382.0px;background:#e0e0e0"></div>
<div class="abs" style="left:951.5px;top:173px;width:1px;height:11.5px;background:#c4c4c4"></div>
<div class="abs" style="left:1016.8px;top:184.5px;width:1px;height:382.0px;background:#e0e0e0"></div>
<div class="abs" style="left:1016.8px;top:173px;width:1px;height:11.5px;background:#c4c4c4"></div>
<div class="abs" style="left:1060.7px;top:184.5px;width:1px;height:382.0px;background:#e0e0e0"></div>
<div class="abs" style="left:1060.7px;top:173px;width:1px;height:11.5px;background:#c4c4c4"></div>
<div class="abs" style="left:1073.9px;top:184.5px;width:1px;height:382.0px;background:#e0e0e0"></div>
<div class="abs" style="left:50px;top:184.00px;width:1026px;height:1px;background:#e0e0e0"></div>
<div class="abs" style="left:32px;top:184.00px;width:18px;height:1px;background:#c4c4c4"></div>
<div class="abs" style="left:50px;top:196.65px;width:1026px;height:1px;background:#e0e0e0"></div>
<div class="abs" style="left:32px;top:196.65px;width:18px;height:1px;background:#c4c4c4"></div>
<div class="abs" style="left:50px;top:209.30px;width:1026px;height:1px;background:#e0e0e0"></div>
<div class="abs" style="left:32px;top:209.30px;width:18px;height:1px;background:#c4c4c4"></div>
<div class="abs" style="left:50px;top:221.95px;width:1026px;height:1px;background:#e0e0e0"></div>
<div class="abs" style="left:32px;top:221.95px;width:18px;height:1px;background:#c4c4c4"></div>
<div class="abs" style="left:50px;top:234.60px;width:1026px;height:1px;background:#e0e0e0"></div>
<div class="abs" style="left:32px;top:234.60px;width:18px;height:1px;background:#c4c4c4"></div>
<div class="abs" style="left:50px;top:247.25px;width:1026px;height:1px;background:#e0e0e0"></div>
<div class="abs" style="left:32px;top:247.25px;width:18px;height:1px;background:#c4c4c4"></div>
<div class="abs" style="left:50px;top:259.90px;width:1026px;height:1px;background:#e0e0e0"></div>
<div class="abs" style="left:32px;top:259.90px;width:18px;height:1px;background:#c4c4c4"></div>
<div class="abs" style="left:50px;top:272.55px;width:1026px;height:1px;background:#e0e0e0"></div>
<div class="abs" style="left:32px;top:272.55px;width:18px;height:1px;background:#c4c4c4"></div>
<div class="abs" style="left:50px;top:285.20px;width:1026px;height:1px;background:#e0e0e0"></div>
<div class="abs" style="left:32px;top:285.20px;width:18px;height:1px;background:#c4c4c4"></div>
<div class="abs" style="left:50px;top:297.85px;width:1026px;height:1px;background:#e0e0e0"></div>
<div class="abs" style="left:32px;top:297.85px;width:18px;height:1px;background:#c4c4c4"></div>
<div class="abs" style="left:50px;top:310.50px;width:1026px;height:1px;background:#e0e0e0"></div>
<div class="abs" style="left:32px;top:310.50px;width:18px;height:1px;background:#c4c4c4"></div>
<div class="abs" style="left:50px;top:323.15px;width:1026px;height:1px;background:#e0e0e0"></div>
<div class="abs" style="left:32px;top:323.15px;width:18px;height:1px;background:#c4c4c4"></div>
<div class="abs" style="left:50px;top:335.80px;width:1026px;height:1px;background:#e0e0e0"></div>
<div class="abs" style="left:32px;top:335.80px;width:18px;height:1px;background:#c4c4c4"></div>
<div class="abs" style="left:50px;top:348.45px;width:1026px;height:1px;background:#e0e0e0"></div>
<div class="abs" style="left:32px;top:348.45px;width:18px;height:1px;background:#c4c4c4"></div>
<div class="abs" style="left:50px;top:361.10px;width:1026px;height:1px;background:#e0e0e0"></div>
<div class="abs" style="left:32px;top:361.10px;width:18px;height:1px;background:#c4c4c4"></div>
<div class="abs" style="left:50px;top:373.75px;width:1026px;height:1px;background:#e0e0e0"></div>
<div class="abs" style="left:32px;top:373.75px;width:18px;height:1px;background:#c4c4c4"></div>
<div class="abs" style="left:50px;top:386.40px;width:1026px;height:1px;background:#e0e0e0"></div>
<div class="abs" style="left:32px;top:386.40px;width:18px;height:1px;background:#c4c4c4"></div>
<div class="abs" style="left:50px;top:399.05px;width:1026px;height:1px;background:#e0e0e0"></div>
<div class="abs" style="left:32px;top:399.05px;width:18px;height:1px;background:#c4c4c4"></div>
<div class="abs" style="left:50px;top:411.70px;width:1026px;height:1px;background:#e0e0e0"></div>
<div class="abs" style="left:32px;top:411.70px;width:18px;height:1px;background:#c4c4c4"></div>
<div class="abs" style="left:50px;top:424.35px;width:1026px;height:1px;background:#e0e0e0"></div>
<div class="abs" style="left:32px;top:424.35px;width:18px;height:1px;background:#c4c4c4"></div>
<div class="abs" style="left:50px;top:437.00px;width:1026px;height:1px;background:#e0e0e0"></div>
<div class="abs" style="left:32px;top:437.00px;width:18px;height:1px;background:#c4c4c4"></div>
<div class="abs" style="left:50px;top:449.65px;width:1026px;height:1px;background:#e0e0e0"></div>
<div class="abs" style="left:32px;top:449.65px;width:18px;height:1px;background:#c4c4c4"></div>
<div class="abs" style="left:50px;top:462.30px;width:1026px;height:1px;background:#e0e0e0"></div>
<div class="abs" style="left:32px;top:462.30px;width:18px;height:1px;background:#c4c4c4"></div>
<div class="abs" style="left:50px;top:474.95px;width:1026px;height:1px;background:#e0e0e0"></div>
<div class="abs" style="left:32px;top:474.95px;width:18px;height:1px;background:#c4c4c4"></div>
<div class="abs" style="left:50px;top:487.60px;width:1026px;height:1px;background:#e0e0e0"></div>
<div class="abs" style="left:32px;top:487.60px;width:18px;height:1px;background:#c4c4c4"></div>
<div class="abs" style="left:50px;top:500.25px;width:1026px;height:1px;background:#e0e0e0"></div>
<div class="abs" style="left:32px;top:500.25px;width:18px;height:1px;background:#c4c4c4"></div>
<div class="abs" style="left:50px;top:512.90px;width:1026px;height:1px;background:#e0e0e0"></div>
<div class="abs" style="left:32px;top:512.90px;width:18px;height:1px;background:#c4c4c4"></div>
<div class="abs" style="left:50px;top:525.55px;width:1026px;height:1px;background:#e0e0e0"></div>
<div class="abs" style="left:32px;top:525.55px;width:18px;height:1px;background:#c4c4c4"></div>
<div class="abs" style="left:50px;top:538.20px;width:1026px;height:1px;background:#e0e0e0"></div>
<div class="abs" style="left:32px;top:538.20px;width:18px;height:1px;background:#c4c4c4"></div>
<div class="abs" style="left:50px;top:550.85px;width:1026px;height:1px;background:#e0e0e0"></div>
<div class="abs" style="left:32px;top:550.85px;width:18px;height:1px;background:#c4c4c4"></div>
<div class="abs" style="left:50px;top:563.50px;width:1026px;height:1px;background:#e0e0e0"></div>
<div class="abs" style="left:32px;top:563.50px;width:18px;height:1px;background:#c4c4c4"></div>
<div class="abs ch" style="left:50px;top:172px;width:45px;height:12.5px;color:#217346">A</div>
<div class="abs ch" style="left:95px;top:172px;width:168.5px;height:12.5px;color:#3a3a3a">B</div>
<div class="abs ch" style="left:263.5px;top:172px;width:111.0px;height:12.5px;color:#3a3a3a">C</div>
<div class="abs ch" style="left:374.5px;top:172px;width:124.69999999999999px;height:12.5px;color:#3a3a3a">D</div>
<div class="abs ch" style="left:499.2px;top:172px;width:193.3px;height:12.5px;color:#3a3a3a">E</div>
<div class="abs ch" style="left:692.5px;top:172px;width:66.20000000000005px;height:12.5px;color:#3a3a3a">F</div>
<div class="abs ch" style="left:758.7px;top:172px;width:56.5px;height:12.5px;color:#3a3a3a">G</div>
<div class="abs ch" style="left:815.2px;top:172px;width:58.19999999999993px;height:12.5px;color:#3a3a3a">H</div>
<div class="abs ch" style="left:873.4px;top:172px;width:78.60000000000002px;height:12.5px;color:#3a3a3a">I</div>
<div class="abs ch" style="left:952px;top:172px;width:65.29999999999995px;height:12.5px;color:#3a3a3a">J</div>
<div class="abs ch" style="left:1017.3px;top:172px;width:43.90000000000009px;height:12.5px;color:#3a3a3a">K</div>
<div class="abs rh" style="left:32px;top:184.50px;width:17px;height:12.65px;line-height:14.65px;color:#217346">1</div>
<div class="abs c" style="left:51.5px;top:184.50px;height:12.65px;line-height:14.55px;">SupplierID</div>
<div class="abs c" style="left:96.5px;top:184.50px;height:12.65px;line-height:14.55px;">CompanyName</div>
<div class="abs c" style="left:265.0px;top:184.50px;height:12.65px;line-height:14.55px;">ContactName</div>
<div class="abs c" style="left:376.0px;top:184.50px;height:12.65px;line-height:14.55px;">ContactTitle</div>
<div class="abs c" style="left:500.7px;top:184.50px;height:12.65px;line-height:14.55px;">Address</div>
<div class="abs c" style="left:694.0px;top:184.50px;height:12.65px;line-height:14.55px;">City</div>
<div class="abs c" style="left:760.2px;top:184.50px;height:12.65px;line-height:14.55px;">PostalCode</div>
<div class="abs c" style="left:816.7px;top:184.50px;height:12.65px;line-height:14.55px;">Country</div>
<div class="abs c" style="left:874.9px;top:184.50px;height:12.65px;line-height:14.55px;">Phone</div>
<div class="abs c" style="left:953.5px;top:184.50px;height:12.65px;line-height:14.55px;">Fax</div>
<div class="abs rh" style="left:32px;top:197.15px;width:17px;height:12.65px;line-height:14.65px;color:#3a3a3a">2</div>
<div class="abs c" style="left:50px;width:42.2px;top:197.15px;height:12.65px;line-height:14.55px;text-align:right;">1</div>
<div class="abs c" style="left:96.5px;top:197.15px;height:12.65px;line-height:14.55px;">Exotic Liquids</div>
<div class="abs c" style="left:265.0px;top:197.15px;height:12.65px;line-height:14.55px;">Charlotte Cooper</div>
<div class="abs c" style="left:376.0px;top:197.15px;height:12.65px;line-height:14.55px;">Purchasing Manager</div>
<div class="abs c" style="left:500.7px;top:197.15px;height:12.65px;line-height:14.55px;">49 Gilbert St.</div>
<div class="abs c" style="left:694.0px;top:197.15px;height:12.65px;line-height:14.55px;">London</div>
<div class="abs c" style="left:760.2px;top:197.15px;height:12.65px;line-height:14.55px;">EC1 4SD</div>
<div class="abs c" style="left:816.7px;top:197.15px;height:12.65px;line-height:14.55px;">UK</div>
<div class="abs c" style="left:874.9px;top:197.15px;height:12.65px;line-height:14.55px;">(171) 555-2222</div>
<div class="abs rh" style="left:32px;top:209.80px;width:17px;height:12.65px;line-height:14.65px;color:#3a3a3a">3</div>
<div class="abs c" style="left:50px;width:42.2px;top:209.80px;height:12.65px;line-height:14.55px;text-align:right;">2</div>
<div class="abs c" style="left:96.5px;top:209.80px;height:12.65px;line-height:14.55px;">New Orleans Cajun Delights</div>
<div class="abs c" style="left:265.0px;top:209.80px;height:12.65px;line-height:14.55px;">Shelley Burke</div>
<div class="abs c" style="left:376.0px;top:209.80px;height:12.65px;line-height:14.55px;">Order Administrator</div>
<div class="abs c" style="left:500.7px;top:209.80px;height:12.65px;line-height:14.55px;">P.O. Box 78934</div>
<div class="abs c" style="left:694.0px;top:209.80px;height:12.65px;line-height:14.55px;">New Orleans</div>
<div class="abs c" style="left:760.2px;top:209.80px;height:12.65px;line-height:14.55px;">70117</div>
<svg class="abs" style="left:758.7px;top:209.80px" width="5" height="5"><path d="M0.3 0.3 L4.4 0.3 L0.3 4.4 Z" fill="#21803f"/></svg>
<div class="abs c" style="left:816.7px;top:209.80px;height:12.65px;line-height:14.55px;">USA</div>
<div class="abs c" style="left:874.9px;top:209.80px;height:12.65px;line-height:14.55px;">(100) 555-4822</div>
<div class="abs rh" style="left:32px;top:222.45px;width:17px;height:12.65px;line-height:14.65px;color:#3a3a3a">4</div>
<div class="abs c" style="left:50px;width:42.2px;top:222.45px;height:12.65px;line-height:14.55px;text-align:right;">3</div>
<div class="abs c" style="left:96.5px;top:222.45px;height:12.65px;line-height:14.55px;">Grandma Kelly&#x27;s Homestead</div>
<div class="abs c" style="left:265.0px;top:222.45px;height:12.65px;line-height:14.55px;">Regina Murphy</div>
<div class="abs c" style="left:376.0px;top:222.45px;height:12.65px;line-height:14.55px;">Sales Representative</div>
<div class="abs c" style="left:500.7px;top:222.45px;height:12.65px;line-height:14.55px;">707 Oxford Rd.</div>
<div class="abs c" style="left:694.0px;top:222.45px;height:12.65px;line-height:14.55px;">Ann Arbor</div>
<div class="abs c" style="left:760.2px;top:222.45px;height:12.65px;line-height:14.55px;">48104</div>
<svg class="abs" style="left:758.7px;top:222.45px" width="5" height="5"><path d="M0.3 0.3 L4.4 0.3 L0.3 4.4 Z" fill="#21803f"/></svg>
<div class="abs c" style="left:816.7px;top:222.45px;height:12.65px;line-height:14.55px;">USA</div>
<div class="abs c" style="left:874.9px;top:222.45px;height:12.65px;line-height:14.55px;">(313) 555-5735</div>
<div class="abs c" style="left:953.5px;top:222.45px;height:12.65px;line-height:14.55px;">(313) 555-3349</div>
<div class="abs rh" style="left:32px;top:235.10px;width:17px;height:12.65px;line-height:14.65px;color:#3a3a3a">5</div>
<div class="abs c" style="left:50px;width:42.2px;top:235.10px;height:12.65px;line-height:14.55px;text-align:right;color:#e0362c;">4</div>
<div class="abs c" style="left:96.5px;top:235.10px;height:12.65px;line-height:14.55px;color:#e0362c;">Tokyo Traders</div>
<div class="abs c" style="left:265.0px;top:235.10px;height:12.65px;line-height:14.55px;">Yoshi Nagase</div>
<div class="abs c" style="left:376.0px;top:235.10px;height:12.65px;line-height:14.55px;">Marketing Manager</div>
<div class="abs c" style="left:500.7px;top:235.10px;height:12.65px;line-height:14.55px;">9-8 SekimaiMusashino-shi</div>
<div class="abs c" style="left:694.0px;top:235.10px;height:12.65px;line-height:14.55px;">Tokyo</div>
<div class="abs c" style="left:760.2px;top:235.10px;height:12.65px;line-height:14.55px;">100</div>
<svg class="abs" style="left:758.7px;top:235.10px" width="5" height="5"><path d="M0.3 0.3 L4.4 0.3 L0.3 4.4 Z" fill="#21803f"/></svg>
<div class="abs c" style="left:816.7px;top:235.10px;height:12.65px;line-height:14.55px;">Japan</div>
<div class="abs c" style="left:874.9px;top:235.10px;height:12.65px;line-height:14.55px;">(03) 3555-5011</div>
<div class="abs rh" style="left:32px;top:247.75px;width:17px;height:12.65px;line-height:14.65px;color:#3a3a3a">6</div>
<div class="abs c" style="left:50px;width:42.2px;top:247.75px;height:12.65px;line-height:14.55px;text-align:right;">5</div>
<div class="abs c" style="left:96.5px;top:247.75px;height:12.65px;line-height:14.55px;">Cooperativa de Quesos &#x27;Las Cabras&#x27;</div>
<div class="abs c" style="left:265.0px;top:247.75px;height:12.65px;line-height:14.55px;">Antonio del Valle Saavedra</div>
<div class="abs c" style="left:376.0px;top:247.75px;height:12.65px;line-height:14.55px;">Export Administrator</div>
<div class="abs c" style="left:500.7px;top:247.75px;height:12.65px;line-height:14.55px;">Calle del Rosal 4</div>
<div class="abs c" style="left:694.0px;top:247.75px;height:12.65px;line-height:14.55px;">Oviedo</div>
<div class="abs c" style="left:760.2px;top:247.75px;height:12.65px;line-height:14.55px;">33007</div>
<svg class="abs" style="left:758.7px;top:247.75px" width="5" height="5"><path d="M0.3 0.3 L4.4 0.3 L0.3 4.4 Z" fill="#21803f"/></svg>
<div class="abs c" style="left:816.7px;top:247.75px;height:12.65px;line-height:14.55px;">Spain</div>
<div class="abs c" style="left:874.9px;top:247.75px;height:12.65px;line-height:14.55px;">(98) 598 76 54</div>
<div class="abs rh" style="left:32px;top:260.40px;width:17px;height:12.65px;line-height:14.65px;color:#3a3a3a">7</div>
<div class="abs c" style="left:50px;width:42.2px;top:260.40px;height:12.65px;line-height:14.55px;text-align:right;">6</div>
<div class="abs c" style="left:96.5px;top:260.40px;height:12.65px;line-height:14.55px;">Mayumi&#x27;s</div>
<div class="abs c" style="left:265.0px;top:260.40px;height:12.65px;line-height:14.55px;">Mayumi Ohno</div>
<div class="abs c" style="left:376.0px;top:260.40px;height:12.65px;line-height:14.55px;">Marketing Representative</div>
<div class="abs c" style="left:500.7px;top:260.40px;height:12.65px;line-height:14.55px;">92 SetsukoChuo-ku</div>
<div class="abs c" style="left:694.0px;top:260.40px;height:12.65px;line-height:14.55px;">Osaka</div>
<div class="abs c" style="left:760.2px;top:260.40px;height:12.65px;line-height:14.55px;">545</div>
<svg class="abs" style="left:758.7px;top:260.40px" width="5" height="5"><path d="M0.3 0.3 L4.4 0.3 L0.3 4.4 Z" fill="#21803f"/></svg>
<div class="abs c" style="left:816.7px;top:260.40px;height:12.65px;line-height:14.55px;">Japan</div>
<div class="abs c" style="left:874.9px;top:260.40px;height:12.65px;line-height:14.55px;">(06) 431-7877</div>
<div class="abs rh" style="left:32px;top:273.05px;width:17px;height:12.65px;line-height:14.65px;color:#3a3a3a">8</div>
<div class="abs c" style="left:50px;width:42.2px;top:273.05px;height:12.65px;line-height:14.55px;text-align:right;">7</div>
<div class="abs c" style="left:96.5px;top:273.05px;height:12.65px;line-height:14.55px;">Pavlova, Ltd.</div>
<div class="abs c" style="left:265.0px;top:273.05px;height:12.65px;line-height:14.55px;">Ian Devling</div>
<div class="abs c" style="left:376.0px;top:273.05px;height:12.65px;line-height:14.55px;">Marketing Manager</div>
<div class="abs c" style="left:500.7px;top:273.05px;height:12.65px;line-height:14.55px;">74 Rose St.Moonie Ponds</div>
<div class="abs c" style="left:694.0px;top:273.05px;height:12.65px;line-height:14.55px;">Melbourne</div>
<div class="abs c" style="left:760.2px;top:273.05px;height:12.65px;line-height:14.55px;">3058</div>
<svg class="abs" style="left:758.7px;top:273.05px" width="5" height="5"><path d="M0.3 0.3 L4.4 0.3 L0.3 4.4 Z" fill="#21803f"/></svg>
<div class="abs c" style="left:816.7px;top:273.05px;height:12.65px;line-height:14.55px;">Australia</div>
<div class="abs c" style="left:874.9px;top:273.05px;height:12.65px;line-height:14.55px;">(03) 444-2343</div>
<div class="abs c" style="left:953.5px;top:273.05px;height:12.65px;line-height:14.55px;">(03) 444-6588</div>
<div class="abs rh" style="left:32px;top:285.70px;width:17px;height:12.65px;line-height:14.65px;color:#3a3a3a">9</div>
<div class="abs c" style="left:50px;width:42.2px;top:285.70px;height:12.65px;line-height:14.55px;text-align:right;">8</div>
<div class="abs c" style="left:96.5px;top:285.70px;height:12.65px;line-height:14.55px;">Specialty Biscuits, Ltd.</div>
<div class="abs c" style="left:265.0px;top:285.70px;height:12.65px;line-height:14.55px;">Peter Wilson</div>
<div class="abs c" style="left:376.0px;top:285.70px;height:12.65px;line-height:14.55px;">Sales Representative</div>
<div class="abs c" style="left:500.7px;top:285.70px;height:12.65px;line-height:14.55px;">29 King&#x27;s Way</div>
<div class="abs c" style="left:694.0px;top:285.70px;height:12.65px;line-height:14.55px;">Manchester</div>
<div class="abs c" style="left:760.2px;top:285.70px;height:12.65px;line-height:14.55px;">M14 GSD</div>
<div class="abs c" style="left:816.7px;top:285.70px;height:12.65px;line-height:14.55px;">UK</div>
<div class="abs c" style="left:874.9px;top:285.70px;height:12.65px;line-height:14.55px;">(161) 555-4448</div>
<div class="abs rh" style="left:32px;top:298.35px;width:17px;height:12.65px;line-height:14.65px;color:#3a3a3a">10</div>
<div class="abs c" style="left:50px;width:42.2px;top:298.35px;height:12.65px;line-height:14.55px;text-align:right;">9</div>
<div class="abs c" style="left:96.5px;top:298.35px;height:12.65px;line-height:14.55px;">PB Knäckebröd AB</div>
<div class="abs c" style="left:265.0px;top:298.35px;height:12.65px;line-height:14.55px;">Lars Peterson</div>
<div class="abs c" style="left:376.0px;top:298.35px;height:12.65px;line-height:14.55px;">Sales Agent</div>
<div class="abs c" style="left:500.7px;top:298.35px;height:12.65px;line-height:14.55px;">Kaloadagatan 13</div>
<div class="abs c" style="left:694.0px;top:298.35px;height:12.65px;line-height:14.55px;">Göteborg</div>
<div class="abs c" style="left:760.2px;top:298.35px;height:12.65px;line-height:14.55px;">S-345 67</div>
<div class="abs c" style="left:816.7px;top:298.35px;height:12.65px;line-height:14.55px;">Sweden</div>
<div class="abs c" style="left:874.9px;top:298.35px;height:12.65px;line-height:14.55px;">031-987 65 43</div>
<div class="abs c" style="left:953.5px;top:298.35px;height:12.65px;line-height:14.55px;">031-987 65 91</div>
<div class="abs rh" style="left:32px;top:311.00px;width:17px;height:12.65px;line-height:14.65px;color:#3a3a3a">11</div>
<div class="abs c" style="left:50px;width:42.2px;top:311.00px;height:12.65px;line-height:14.55px;text-align:right;">10</div>
<div class="abs c" style="left:96.5px;top:311.00px;height:12.65px;line-height:14.55px;">Refrescos Americanas LTDA</div>
<div class="abs c" style="left:265.0px;top:311.00px;height:12.65px;line-height:14.55px;">Carlos Diaz</div>
<div class="abs c" style="left:376.0px;top:311.00px;height:12.65px;line-height:14.55px;">Marketing Manager</div>
<div class="abs c" style="left:500.7px;top:311.00px;height:12.65px;line-height:14.55px;">Av. das Americanas 12.890</div>
<div class="abs c" style="left:694.0px;top:311.00px;height:12.65px;line-height:14.55px;">São Paulo</div>
<div class="abs c" style="left:760.2px;top:311.00px;height:12.65px;line-height:14.55px;">5442</div>
<svg class="abs" style="left:758.7px;top:311.00px" width="5" height="5"><path d="M0.3 0.3 L4.4 0.3 L0.3 4.4 Z" fill="#21803f"/></svg>
<div class="abs c" style="left:816.7px;top:311.00px;height:12.65px;line-height:14.55px;">Brazil</div>
<div class="abs c" style="left:874.9px;top:311.00px;height:12.65px;line-height:14.55px;">(11) 555 4640</div>
<div class="abs rh" style="left:32px;top:323.65px;width:17px;height:12.65px;line-height:14.65px;color:#3a3a3a">12</div>
<div class="abs c" style="left:50px;width:42.2px;top:323.65px;height:12.65px;line-height:14.55px;text-align:right;">11</div>
<div class="abs c" style="left:96.5px;top:323.65px;height:12.65px;line-height:14.55px;">Heli Süßwaren GmbH &amp; Co. KG</div>
<div class="abs c" style="left:265.0px;top:323.65px;height:12.65px;line-height:14.55px;">Petra Winkler</div>
<div class="abs c" style="left:376.0px;top:323.65px;height:12.65px;line-height:14.55px;">Sales Manager</div>
<div class="abs c" style="left:500.7px;top:323.65px;height:12.65px;line-height:14.55px;">Tiergartenstraße 5</div>
<div class="abs c" style="left:694.0px;top:323.65px;height:12.65px;line-height:14.55px;">Berlin</div>
<div class="abs c" style="left:760.2px;top:323.65px;height:12.65px;line-height:14.55px;">10785</div>
<svg class="abs" style="left:758.7px;top:323.65px" width="5" height="5"><path d="M0.3 0.3 L4.4 0.3 L0.3 4.4 Z" fill="#21803f"/></svg>
<div class="abs c" style="left:816.7px;top:323.65px;height:12.65px;line-height:14.55px;">Germany</div>
<div class="abs c" style="left:874.9px;top:323.65px;height:12.65px;line-height:14.55px;">(010) 9984510</div>
<div class="abs rh" style="left:32px;top:336.30px;width:17px;height:12.65px;line-height:14.65px;color:#3a3a3a">13</div>
<div class="abs c" style="left:50px;width:42.2px;top:336.30px;height:12.65px;line-height:14.55px;text-align:right;">12</div>
<div class="abs c" style="left:96.5px;top:336.30px;height:12.65px;line-height:14.55px;">Plutzer Lebensmittelgroßmärkte AG</div>
<div class="abs c" style="left:265.0px;top:336.30px;height:12.65px;line-height:14.55px;">Martin Bein</div>
<div class="abs c" style="left:376.0px;top:336.30px;height:12.65px;line-height:14.55px;">International Marketing Mgr.</div>
<div class="abs c" style="left:500.7px;top:336.30px;height:12.65px;line-height:14.55px;">Bogenallee 51</div>
<div class="abs c" style="left:694.0px;top:336.30px;height:12.65px;line-height:14.55px;">Frankfurt</div>
<div class="abs c" style="left:760.2px;top:336.30px;height:12.65px;line-height:14.55px;">60439</div>
<svg class="abs" style="left:758.7px;top:336.30px" width="5" height="5"><path d="M0.3 0.3 L4.4 0.3 L0.3 4.4 Z" fill="#21803f"/></svg>
<div class="abs c" style="left:816.7px;top:336.30px;height:12.65px;line-height:14.55px;">Germany</div>
<div class="abs c" style="left:874.9px;top:336.30px;height:12.65px;line-height:14.55px;">(069) 992755</div>
<div class="abs rh" style="left:32px;top:348.95px;width:17px;height:12.65px;line-height:14.65px;color:#3a3a3a">14</div>
<div class="abs c" style="left:50px;width:42.2px;top:348.95px;height:12.65px;line-height:14.55px;text-align:right;">13</div>
<div class="abs c" style="left:96.5px;top:348.95px;height:12.65px;line-height:14.55px;">Nord-Ost-Fisch Handelsgesellschaft mbH</div>
<div class="abs c" style="left:265.0px;top:348.95px;height:12.65px;line-height:14.55px;">Sven Petersen</div>
<div class="abs c" style="left:376.0px;top:348.95px;height:12.65px;line-height:14.55px;">Coordinator Foreign Markets</div>
<div class="abs c" style="left:500.7px;top:348.95px;height:12.65px;line-height:14.55px;">Frahmredder 112a</div>
<div class="abs c" style="left:694.0px;top:348.95px;height:12.65px;line-height:14.55px;">Cuxhaven</div>
<div class="abs c" style="left:760.2px;top:348.95px;height:12.65px;line-height:14.55px;">27478</div>
<svg class="abs" style="left:758.7px;top:348.95px" width="5" height="5"><path d="M0.3 0.3 L4.4 0.3 L0.3 4.4 Z" fill="#21803f"/></svg>
<div class="abs c" style="left:816.7px;top:348.95px;height:12.65px;line-height:14.55px;">Germany</div>
<div class="abs c" style="left:874.9px;top:348.95px;height:12.65px;line-height:14.55px;">(04721) 8713</div>
<div class="abs c" style="left:953.5px;top:348.95px;height:12.65px;line-height:14.55px;">(04721) 8714</div>
<div class="abs rh" style="left:32px;top:361.60px;width:17px;height:12.65px;line-height:14.65px;color:#3a3a3a">15</div>
<div class="abs c" style="left:50px;width:42.2px;top:361.60px;height:12.65px;line-height:14.55px;text-align:right;">14</div>
<div class="abs c" style="left:96.5px;top:361.60px;height:12.65px;line-height:14.55px;">Formaggi Fortini s.r.l.</div>
<div class="abs c" style="left:265.0px;top:361.60px;height:12.65px;line-height:14.55px;">Elio Rossi</div>
<div class="abs c" style="left:376.0px;top:361.60px;height:12.65px;line-height:14.55px;">Sales Representative</div>
<div class="abs c" style="left:500.7px;top:361.60px;height:12.65px;line-height:14.55px;">Viale Dante, 75</div>
<div class="abs c" style="left:694.0px;top:361.60px;height:12.65px;line-height:14.55px;">Ravenna</div>
<div class="abs c" style="left:760.2px;top:361.60px;height:12.65px;line-height:14.55px;">48100</div>
<svg class="abs" style="left:758.7px;top:361.60px" width="5" height="5"><path d="M0.3 0.3 L4.4 0.3 L0.3 4.4 Z" fill="#21803f"/></svg>
<div class="abs c" style="left:816.7px;top:361.60px;height:12.65px;line-height:14.55px;">Italy</div>
<div class="abs c" style="left:874.9px;top:361.60px;height:12.65px;line-height:14.55px;">(0544) 60323</div>
<div class="abs c" style="left:953.5px;top:361.60px;height:12.65px;line-height:14.55px;">(0544) 60603</div>
<div class="abs rh" style="left:32px;top:374.25px;width:17px;height:12.65px;line-height:14.65px;color:#3a3a3a">16</div>
<div class="abs c" style="left:50px;width:42.2px;top:374.25px;height:12.65px;line-height:14.55px;text-align:right;">15</div>
<div class="abs c" style="left:96.5px;top:374.25px;height:12.65px;line-height:14.55px;">Norske Meierier</div>
<div class="abs c" style="left:265.0px;top:374.25px;height:12.65px;line-height:14.55px;">Beate Vileid</div>
<div class="abs c" style="left:376.0px;top:374.25px;height:12.65px;line-height:14.55px;">Marketing Manager</div>
<div class="abs c" style="left:500.7px;top:374.25px;height:12.65px;line-height:14.55px;">Hatlevegen 5</div>
<div class="abs c" style="left:694.0px;top:374.25px;height:12.65px;line-height:14.55px;">Sandvika</div>
<div class="abs c" style="left:760.2px;top:374.25px;height:12.65px;line-height:14.55px;">1320</div>
<svg class="abs" style="left:758.7px;top:374.25px" width="5" height="5"><path d="M0.3 0.3 L4.4 0.3 L0.3 4.4 Z" fill="#21803f"/></svg>
<div class="abs c" style="left:816.7px;top:374.25px;height:12.65px;line-height:14.55px;">Norway</div>
<div class="abs c" style="left:874.9px;top:374.25px;height:12.65px;line-height:14.55px;">(0)2-953010</div>
<div class="abs rh" style="left:32px;top:386.90px;width:17px;height:12.65px;line-height:14.65px;color:#3a3a3a">17</div>
<div class="abs c" style="left:50px;width:42.2px;top:386.90px;height:12.65px;line-height:14.55px;text-align:right;">16</div>
<div class="abs c" style="left:96.5px;top:386.90px;height:12.65px;line-height:14.55px;">Bigfoot Breweries</div>
<div class="abs c" style="left:265.0px;top:386.90px;height:12.65px;line-height:14.55px;">Cheryl Saylor</div>
<div class="abs c" style="left:376.0px;top:386.90px;height:12.65px;line-height:14.55px;">Regional Account Rep.</div>
<div class="abs c" style="left:500.7px;top:386.90px;height:12.65px;line-height:14.55px;">3400 - 8th AvenueSuite 210</div>
<div class="abs c" style="left:694.0px;top:386.90px;height:12.65px;line-height:14.55px;">Bend</div>
<div class="abs c" style="left:760.2px;top:386.90px;height:12.65px;line-height:14.55px;">97101</div>
<svg class="abs" style="left:758.7px;top:386.90px" width="5" height="5"><path d="M0.3 0.3 L4.4 0.3 L0.3 4.4 Z" fill="#21803f"/></svg>
<div class="abs c" style="left:816.7px;top:386.90px;height:12.65px;line-height:14.55px;">USA</div>
<div class="abs c" style="left:874.9px;top:386.90px;height:12.65px;line-height:14.55px;">(503) 555-9931</div>
<div class="abs rh" style="left:32px;top:399.55px;width:17px;height:12.65px;line-height:14.65px;color:#3a3a3a">18</div>
<div class="abs c" style="left:50px;width:42.2px;top:399.55px;height:12.65px;line-height:14.55px;text-align:right;">17</div>
<div class="abs c" style="left:96.5px;top:399.55px;height:12.65px;line-height:14.55px;">Svensk Sjöföda AB</div>
<div class="abs c" style="left:265.0px;top:399.55px;height:12.65px;line-height:14.55px;">Michael Björn</div>
<div class="abs c" style="left:376.0px;top:399.55px;height:12.65px;line-height:14.55px;">Sales Representative</div>
<div class="abs c" style="left:500.7px;top:399.55px;height:12.65px;line-height:14.55px;">Brovallavägen 231</div>
<div class="abs c" style="left:694.0px;top:399.55px;height:12.65px;line-height:14.55px;">Stockholm</div>
<div class="abs c" style="left:760.2px;top:399.55px;height:12.65px;line-height:14.55px;">S-123 45</div>
<div class="abs c" style="left:816.7px;top:399.55px;height:12.65px;line-height:14.55px;">Sweden</div>
<div class="abs c" style="left:874.9px;top:399.55px;height:12.65px;line-height:14.55px;">08-123 45 67</div>
<div class="abs rh" style="left:32px;top:412.20px;width:17px;height:12.65px;line-height:14.65px;color:#3a3a3a">19</div>
<div class="abs c" style="left:50px;width:42.2px;top:412.20px;height:12.65px;line-height:14.55px;text-align:right;">18</div>
<div class="abs c" style="left:96.5px;top:412.20px;height:12.65px;line-height:14.55px;">Aux joyeux ecclésiastiques</div>
<div class="abs c" style="left:265.0px;top:412.20px;height:12.65px;line-height:14.55px;">Guylène Nodier</div>
<div class="abs c" style="left:376.0px;top:412.20px;height:12.65px;line-height:14.55px;">Sales Manager</div>
<div class="abs c" style="left:500.7px;top:412.20px;height:12.65px;line-height:14.55px;">203, Rue des Francs-Bourgeois</div>
<div class="abs c" style="left:694.0px;top:412.20px;height:12.65px;line-height:14.55px;">Paris</div>
<div class="abs c" style="left:760.2px;top:412.20px;height:12.65px;line-height:14.55px;">75004</div>
<svg class="abs" style="left:758.7px;top:412.20px" width="5" height="5"><path d="M0.3 0.3 L4.4 0.3 L0.3 4.4 Z" fill="#21803f"/></svg>
<div class="abs c" style="left:816.7px;top:412.20px;height:12.65px;line-height:14.55px;">France</div>
<div class="abs c" style="left:874.9px;top:412.20px;height:12.65px;line-height:14.55px;">(1) 03.83.00.68</div>
<div class="abs c" style="left:953.5px;top:412.20px;height:12.65px;line-height:14.55px;">(1) 03.83.00.62</div>
<div class="abs rh" style="left:32px;top:424.85px;width:17px;height:12.65px;line-height:14.65px;color:#3a3a3a">20</div>
<div class="abs c" style="left:50px;width:42.2px;top:424.85px;height:12.65px;line-height:14.55px;text-align:right;">19</div>
<div class="abs c" style="left:96.5px;top:424.85px;height:12.65px;line-height:14.55px;">New England Seafood Cannery</div>
<div class="abs c" style="left:265.0px;top:424.85px;height:12.65px;line-height:14.55px;">Robb Merchant</div>
<div class="abs c" style="left:376.0px;top:424.85px;height:12.65px;line-height:14.55px;">Wholesale Account Agent</div>
<div class="abs c" style="left:500.7px;top:424.85px;height:12.65px;line-height:14.55px;">Order Processing Dept.2100 Paul Revere Blvd.</div>
<div class="abs c" style="left:694.0px;top:424.85px;height:12.65px;line-height:14.55px;">Boston</div>
<div class="abs c" style="left:760.2px;top:424.85px;height:12.65px;line-height:14.55px;">02134</div>
<svg class="abs" style="left:758.7px;top:424.85px" width="5" height="5"><path d="M0.3 0.3 L4.4 0.3 L0.3 4.4 Z" fill="#21803f"/></svg>
<div class="abs c" style="left:816.7px;top:424.85px;height:12.65px;line-height:14.55px;">USA</div>
<div class="abs c" style="left:874.9px;top:424.85px;height:12.65px;line-height:14.55px;">(617) 555-3267</div>
<div class="abs c" style="left:953.5px;top:424.85px;height:12.65px;line-height:14.55px;">(617) 555-3389</div>
<div class="abs rh" style="left:32px;top:437.50px;width:17px;height:12.65px;line-height:14.65px;color:#3a3a3a">21</div>
<div class="abs c" style="left:50px;width:42.2px;top:437.50px;height:12.65px;line-height:14.55px;text-align:right;">20</div>
<div class="abs c" style="left:96.5px;top:437.50px;height:12.65px;line-height:14.55px;">Leka Trading</div>
<div class="abs c" style="left:265.0px;top:437.50px;height:12.65px;line-height:14.55px;">Chandra Leka</div>
<div class="abs c" style="left:376.0px;top:437.50px;height:12.65px;line-height:14.55px;">Owner</div>
<div class="abs c" style="left:500.7px;top:437.50px;height:12.65px;line-height:14.55px;">471 Serangoon Loop, Suite #402</div>
<div class="abs c" style="left:694.0px;top:437.50px;height:12.65px;line-height:14.55px;">Singapore</div>
<div class="abs c" style="left:760.2px;top:437.50px;height:12.65px;line-height:14.55px;">0512</div>
<svg class="abs" style="left:758.7px;top:437.50px" width="5" height="5"><path d="M0.3 0.3 L4.4 0.3 L0.3 4.4 Z" fill="#21803f"/></svg>
<div class="abs c" style="left:816.7px;top:437.50px;height:12.65px;line-height:14.55px;">Singapore</div>
<div class="abs c" style="left:874.9px;top:437.50px;height:12.65px;line-height:14.55px;">555-8787</div>
<div class="abs rh" style="left:32px;top:450.15px;width:17px;height:12.65px;line-height:14.65px;color:#3a3a3a">22</div>
<div class="abs c" style="left:50px;width:42.2px;top:450.15px;height:12.65px;line-height:14.55px;text-align:right;">21</div>
<div class="abs c" style="left:96.5px;top:450.15px;height:12.65px;line-height:14.55px;">Lyngbysild</div>
<div class="abs c" style="left:265.0px;top:450.15px;height:12.65px;line-height:14.55px;">Niels Petersen</div>
<div class="abs c" style="left:376.0px;top:450.15px;height:12.65px;line-height:14.55px;">Sales Manager</div>
<div class="abs c" style="left:500.7px;top:450.15px;height:12.65px;line-height:14.55px;">LyngbysildFiskebakken 10</div>
<div class="abs c" style="left:694.0px;top:450.15px;height:12.65px;line-height:14.55px;">Lyngby</div>
<div class="abs c" style="left:760.2px;top:450.15px;height:12.65px;line-height:14.55px;">2800</div>
<svg class="abs" style="left:758.7px;top:450.15px" width="5" height="5"><path d="M0.3 0.3 L4.4 0.3 L0.3 4.4 Z" fill="#21803f"/></svg>
<div class="abs c" style="left:816.7px;top:450.15px;height:12.65px;line-height:14.55px;">Denmark</div>
<div class="abs c" style="left:874.9px;top:450.15px;height:12.65px;line-height:14.55px;">43844108</div>
<svg class="abs" style="left:873.4px;top:450.15px" width="5" height="5"><path d="M0.3 0.3 L4.4 0.3 L0.3 4.4 Z" fill="#21803f"/></svg>
<div class="abs c" style="left:953.5px;top:450.15px;height:12.65px;line-height:14.55px;">43844115</div>
<svg class="abs" style="left:952px;top:450.15px" width="5" height="5"><path d="M0.3 0.3 L4.4 0.3 L0.3 4.4 Z" fill="#21803f"/></svg>
<div class="abs rh" style="left:32px;top:462.80px;width:17px;height:12.65px;line-height:14.65px;color:#3a3a3a">23</div>
<div class="abs c" style="left:50px;width:42.2px;top:462.80px;height:12.65px;line-height:14.55px;text-align:right;">22</div>
<div class="abs c" style="left:96.5px;top:462.80px;height:12.65px;line-height:14.55px;">Zaanse Snoepfabriek</div>
<div class="abs c" style="left:265.0px;top:462.80px;height:12.65px;line-height:14.55px;">Dirk Luchte</div>
<div class="abs c" style="left:376.0px;top:462.80px;height:12.65px;line-height:14.55px;">Accounting Manager</div>
<div class="abs c" style="left:500.7px;top:462.80px;height:12.65px;line-height:14.55px;">VerkoopRijnweg 22</div>
<div class="abs c" style="left:694.0px;top:462.80px;height:12.65px;line-height:14.55px;">Zaandam</div>
<div class="abs c" style="left:760.2px;top:462.80px;height:12.65px;line-height:14.55px;">9999 ZZ</div>
<div class="abs c" style="left:816.7px;top:462.80px;height:12.65px;line-height:14.55px;">Netherlands</div>
<div class="abs c" style="left:874.9px;top:462.80px;height:12.65px;line-height:14.55px;">(12345) 1212</div>
<div class="abs c" style="left:953.5px;top:462.80px;height:12.65px;line-height:14.55px;">(12345) 1210</div>
<div class="abs rh" style="left:32px;top:475.45px;width:17px;height:12.65px;line-height:14.65px;color:#3a3a3a">24</div>
<div class="abs c" style="left:50px;width:42.2px;top:475.45px;height:12.65px;line-height:14.55px;text-align:right;">23</div>
<div class="abs c" style="left:96.5px;top:475.45px;height:12.65px;line-height:14.55px;">Karkki Oy</div>
<div class="abs c" style="left:265.0px;top:475.45px;height:12.65px;line-height:14.55px;">Anne Heikkonen</div>
<div class="abs c" style="left:376.0px;top:475.45px;height:12.65px;line-height:14.55px;">Product Manager</div>
<div class="abs c" style="left:500.7px;top:475.45px;height:12.65px;line-height:14.55px;">Valtakatu 12</div>
<div class="abs c" style="left:694.0px;top:475.45px;height:12.65px;line-height:14.55px;">Lappeenranta</div>
<div class="abs c" style="left:760.2px;top:475.45px;height:12.65px;line-height:14.55px;">53120</div>
<svg class="abs" style="left:758.7px;top:475.45px" width="5" height="5"><path d="M0.3 0.3 L4.4 0.3 L0.3 4.4 Z" fill="#21803f"/></svg>
<div class="abs c" style="left:816.7px;top:475.45px;height:12.65px;line-height:14.55px;">Finland</div>
<div class="abs c" style="left:874.9px;top:475.45px;height:12.65px;line-height:14.55px;">(953) 10956</div>
<div class="abs rh" style="left:32px;top:488.10px;width:17px;height:12.65px;line-height:14.65px;color:#3a3a3a">25</div>
<div class="abs c" style="left:50px;width:42.2px;top:488.10px;height:12.65px;line-height:14.55px;text-align:right;">24</div>
<div class="abs c" style="left:96.5px;top:488.10px;height:12.65px;line-height:14.55px;">G&#x27;day, Mate</div>
<div class="abs c" style="left:265.0px;top:488.10px;height:12.65px;line-height:14.55px;">Wendy Mackenzie</div>
<div class="abs c" style="left:376.0px;top:488.10px;height:12.65px;line-height:14.55px;">Sales Representative</div>
<div class="abs c" style="left:500.7px;top:488.10px;height:12.65px;line-height:14.55px;">170 Prince Edward ParadeHunter&#x27;s Hill</div>
<div class="abs c" style="left:694.0px;top:488.10px;height:12.65px;line-height:14.55px;">Sydney</div>
<div class="abs c" style="left:760.2px;top:488.10px;height:12.65px;line-height:14.55px;">2042</div>
<svg class="abs" style="left:758.7px;top:488.10px" width="5" height="5"><path d="M0.3 0.3 L4.4 0.3 L0.3 4.4 Z" fill="#21803f"/></svg>
<div class="abs c" style="left:816.7px;top:488.10px;height:12.65px;line-height:14.55px;">Australia</div>
<div class="abs c" style="left:874.9px;top:488.10px;height:12.65px;line-height:14.55px;">(02) 555-5914</div>
<div class="abs c" style="left:953.5px;top:488.10px;height:12.65px;line-height:14.55px;">(02) 555-4873</div>
<div class="abs rh" style="left:32px;top:500.75px;width:17px;height:12.65px;line-height:14.65px;color:#3a3a3a">26</div>
<div class="abs c" style="left:50px;width:42.2px;top:500.75px;height:12.65px;line-height:14.55px;text-align:right;">25</div>
<div class="abs c" style="left:96.5px;top:500.75px;height:12.65px;line-height:14.55px;">Ma Maison</div>
<div class="abs c" style="left:265.0px;top:500.75px;height:12.65px;line-height:14.55px;">Jean-Guy Lauzon</div>
<div class="abs c" style="left:376.0px;top:500.75px;height:12.65px;line-height:14.55px;">Marketing Manager</div>
<div class="abs c" style="left:500.7px;top:500.75px;height:12.65px;line-height:14.55px;">2960 Rue St. Laurent</div>
<div class="abs c" style="left:694.0px;top:500.75px;height:12.65px;line-height:14.55px;">Montréal</div>
<div class="abs c" style="left:760.2px;top:500.75px;height:12.65px;line-height:14.55px;">H1J 1C3</div>
<div class="abs c" style="left:816.7px;top:500.75px;height:12.65px;line-height:14.55px;">Canada</div>
<div class="abs c" style="left:874.9px;top:500.75px;height:12.65px;line-height:14.55px;">(514) 555-9022</div>
<div class="abs rh" style="left:32px;top:513.40px;width:17px;height:12.65px;line-height:14.65px;color:#3a3a3a">27</div>
<div class="abs c" style="left:50px;width:42.2px;top:513.40px;height:12.65px;line-height:14.55px;text-align:right;">26</div>
<div class="abs c" style="left:96.5px;top:513.40px;height:12.65px;line-height:14.55px;">Pasta Buttini s.r.l.</div>
<div class="abs c" style="left:265.0px;top:513.40px;height:12.65px;line-height:14.55px;">Giovanni Giudici</div>
<div class="abs c" style="left:376.0px;top:513.40px;height:12.65px;line-height:14.55px;">Order Administrator</div>
<div class="abs c" style="left:500.7px;top:513.40px;height:12.65px;line-height:14.55px;">Via dei Gelsomini, 153</div>
<div class="abs c" style="left:694.0px;top:513.40px;height:12.65px;line-height:14.55px;">Salerno</div>
<div class="abs c" style="left:760.2px;top:513.40px;height:12.65px;line-height:14.55px;">84100</div>
<svg class="abs" style="left:758.7px;top:513.40px" width="5" height="5"><path d="M0.3 0.3 L4.4 0.3 L0.3 4.4 Z" fill="#21803f"/></svg>
<div class="abs c" style="left:816.7px;top:513.40px;height:12.65px;line-height:14.55px;">Italy</div>
<div class="abs c" style="left:874.9px;top:513.40px;height:12.65px;line-height:14.55px;">(089) 6547665</div>
<div class="abs c" style="left:953.5px;top:513.40px;height:12.65px;line-height:14.55px;">(089) 6547667</div>
<div class="abs rh" style="left:32px;top:526.05px;width:17px;height:12.65px;line-height:14.65px;color:#3a3a3a">28</div>
<div class="abs c" style="left:50px;width:42.2px;top:526.05px;height:12.65px;line-height:14.55px;text-align:right;">27</div>
<div class="abs c" style="left:96.5px;top:526.05px;height:12.65px;line-height:14.55px;">Escargots Nouveaux</div>
<div class="abs c" style="left:265.0px;top:526.05px;height:12.65px;line-height:14.55px;">Marie Delamare</div>
<div class="abs c" style="left:376.0px;top:526.05px;height:12.65px;line-height:14.55px;">Sales Manager</div>
<div class="abs c" style="left:500.7px;top:526.05px;height:12.65px;line-height:14.55px;">22, rue H. Voiron</div>
<div class="abs c" style="left:694.0px;top:526.05px;height:12.65px;line-height:14.55px;">Montceau</div>
<div class="abs c" style="left:760.2px;top:526.05px;height:12.65px;line-height:14.55px;">71300</div>
<svg class="abs" style="left:758.7px;top:526.05px" width="5" height="5"><path d="M0.3 0.3 L4.4 0.3 L0.3 4.4 Z" fill="#21803f"/></svg>
<div class="abs c" style="left:816.7px;top:526.05px;height:12.65px;line-height:14.55px;">France</div>
<div class="abs c" style="left:874.9px;top:526.05px;height:12.65px;line-height:14.55px;">85.57.00.07</div>
<div class="abs rh" style="left:32px;top:538.70px;width:17px;height:12.65px;line-height:14.65px;color:#3a3a3a">29</div>
<div class="abs c" style="left:50px;width:42.2px;top:538.70px;height:12.65px;line-height:14.55px;text-align:right;">28</div>
<div class="abs c" style="left:96.5px;top:538.70px;height:12.65px;line-height:14.55px;">Gai pâturage</div>
<div class="abs c" style="left:265.0px;top:538.70px;height:12.65px;line-height:14.55px;">Eliane Noz</div>
<div class="abs c" style="left:376.0px;top:538.70px;height:12.65px;line-height:14.55px;">Sales Representative</div>
<div class="abs c" style="left:500.7px;top:538.70px;height:12.65px;line-height:14.55px;">Bat. B3, rue des Alpes</div>
<div class="abs c" style="left:694.0px;top:538.70px;height:12.65px;line-height:14.55px;">Annecy</div>
<div class="abs c" style="left:760.2px;top:538.70px;height:12.65px;line-height:14.55px;">74000</div>
<svg class="abs" style="left:758.7px;top:538.70px" width="5" height="5"><path d="M0.3 0.3 L4.4 0.3 L0.3 4.4 Z" fill="#21803f"/></svg>
<div class="abs c" style="left:816.7px;top:538.70px;height:12.65px;line-height:14.55px;">France</div>
<div class="abs c" style="left:874.9px;top:538.70px;height:12.65px;line-height:14.55px;">38.76.98.06</div>
<div class="abs c" style="left:953.5px;top:538.70px;height:12.65px;line-height:14.55px;">38.76.98.58</div>
<div class="abs rh" style="left:32px;top:551.35px;width:17px;height:12.65px;line-height:14.65px;color:#3a3a3a">30</div>
<div class="abs c" style="left:50px;width:42.2px;top:551.35px;height:12.65px;line-height:14.55px;text-align:right;">29</div>
<div class="abs c" style="left:96.5px;top:551.35px;height:12.65px;line-height:14.55px;">Forêts d&#x27;érables</div>
<div class="abs c" style="left:265.0px;top:551.35px;height:12.65px;line-height:14.55px;">Chantal Goulet</div>
<div class="abs c" style="left:376.0px;top:551.35px;height:12.65px;line-height:14.55px;">Accounting Manager</div>
<div class="abs c" style="left:500.7px;top:551.35px;height:12.65px;line-height:14.55px;">148 rue Chasseur</div>
<div class="abs c" style="left:694.0px;top:551.35px;height:12.65px;line-height:14.55px;">Saint-Hyacinthe</div>
<div class="abs c" style="left:760.2px;top:551.35px;height:12.65px;line-height:14.55px;">J2S 7S8</div>
<div class="abs c" style="left:816.7px;top:551.35px;height:12.65px;line-height:14.55px;">Canada</div>
<div class="abs c" style="left:874.9px;top:551.35px;height:12.65px;line-height:14.55px;">(514) 555-2955</div>
<div class="abs c" style="left:953.5px;top:551.35px;height:12.65px;line-height:14.55px;">(514) 555-2921</div>
<div class="abs" style="left:49.5px;top:183.6px;width:45.5px;height:14.25px;border:1.1px solid #217346;box-sizing:border-box"></div>
<div class="abs" style="left:92.9px;top:195.25px;width:2.6px;height:2.6px;background:#217346;border:0.5px solid #fff"></div>

<div class="abs" style="left:32px;top:566.9px;width:1056px;height:16.200000000000045px;background:#e6e6e6"></div>
<div class="abs" style="left:32px;top:566.4px;width:1044px;height:1px;background:#c6c6c6"></div>
<svg style="left:47.5px;top:572.5px" width="4" height="6" viewBox="0 0 4 6"><path d="M3.500 0.300L0.500 3 3.500 5.700z" fill="#c8c8c8"/></svg>
<svg style="left:63px;top:572.5px" width="4" height="6" viewBox="0 0 4 6"><path d="M0.500 0.300L3.500 3 0.500 5.700z" fill="#c8c8c8"/></svg>
<div class="abs" style="left:90px;top:568px;width:37.5px;height:12.6px;background:linear-gradient(#00b0f0 70%,#3fc4f5);color:#111;font-size:9.1px;line-height:13.5px;text-align:center;white-space:nowrap;">Home</div>
<div class="abs" style="left:130px;top:568px;width:49px;height:12.6px;background:#0070c0;color:#fff;font-size:9.1px;line-height:13.5px;text-align:center;white-space:nowrap;">Products</div>
<div class="abs" style="left:181.6px;top:568px;width:56.80000000000001px;height:12.6px;background:#000;color:#fff;font-size:9.1px;line-height:13.5px;text-align:center;white-space:nowrap;">Customers</div>
<div class="abs" style="left:240px;top:567.4px;width:54px;height:14.6px;background:linear-gradient(#e9e9e9,#f6f3f8 60%,#f3eef6);color:#217346;font-size:9.1px;line-height:15.5px;text-align:center;white-space:nowrap;font-weight:bold;font-size:9px;border-bottom:1.400px solid #5f9a79;box-sizing:border-box;">Suppliers</div>
<div class="abs" style="left:296px;top:568px;width:35px;height:12.6px;background:transparent;color:#555;font-size:9.1px;line-height:13.5px;text-align:center;white-space:nowrap;">NOTE</div>
<div class="abs" style="left:331.300px;top:569.500px;width:1px;height:11px;background:#ababab"></div>
<svg style="left:349.500px;top:569.800px" width="11" height="11" viewBox="0 0 11 11"><circle cx="5.500" cy="5.500" r="4.800" fill="none" stroke="#777" stroke-width="0.800"/><path d="M5.500 2.800V8.200M2.800 5.500H8.200" stroke="#777" stroke-width="0.800"/></svg>
<div class="abs" style="left:664.500px;top:571.500px;width:1px;height:1px;background:#999;box-shadow:0 3px 0 #999,0 6px 0 #999"></div>
<div class="abs" style="left:674.300px;top:569.900px;width:399.500px;height:10.300px;background:#e0e0e0"></div>
<div class="abs" style="left:674.300px;top:569.900px;width:9.700px;height:10.300px;background:#fff;border:0.500px solid #d0d0d0;box-sizing:border-box"></div>
<svg style="left:677.500px;top:572.500px" width="3.500" height="5.500" viewBox="0 0 3.500 5.500"><path d="M3.200 0.300L0.400 2.750 3.200 5.200z" fill="#666"/></svg>
<div class="abs" style="left:686px;top:569.900px;width:342.800px;height:10.300px;background:#fff;border:0.500px solid #d0d0d0;box-sizing:border-box"></div>
<div class="abs" style="left:1064.200px;top:569.900px;width:9.700px;height:10.300px;background:#fff;border:0.500px solid #d0d0d0;box-sizing:border-box"></div>
<svg style="left:1067.600px;top:572.500px" width="3.500" height="5.500" viewBox="0 0 3.500 5.500"><path d="M0.300 0.300L3.100 2.750 0.300 5.200z" fill="#666"/></svg>
<div class="abs" style="left:1076px;top:172px;width:12px;height:395px;background:#e6e6e6"></div>
<div class="abs" style="left:1076.400px;top:173px;width:10.200px;height:10.500px;background:#fff;border:0.500px solid #d0d0d0;box-sizing:border-box"></div>
<svg style="left:1078.700px;top:176.800px" width="5.600" height="3.500" viewBox="0 0 5.600 3.500"><path d="M0.300 3.200L2.800 0.400 5.300 3.200z" fill="#666"/></svg>
<div class="abs" style="left:1076.400px;top:185px;width:10.200px;height:359px;background:#fff;border:0.500px solid #d0d0d0;box-sizing:border-box"></div>
<div class="abs" style="left:1076.400px;top:544px;width:10.200px;height:13px;background:#dadada"></div>
<div class="abs" style="left:1076.400px;top:557px;width:10.200px;height:10px;background:#fff;border:0.500px solid #d0d0d0;box-sizing:border-box"></div>
<svg style="left:1078.700px;top:560.500px" width="5.600" height="3.500" viewBox="0 0 5.600 3.500"><path d="M0.300 0.300L2.800 3.100 5.300 0.300z" fill="#666"/></svg>
<div class="abs" style="left:32px;top:583.1px;width:1056px;height:15.399999999999977px;background:#f3f3f3"></div>
<svg style="left:37px;top:586.300px" width="11" height="9.500" viewBox="0 0 11 9.500"><rect x="0.400" y="0.400" width="10.200" height="8.700" fill="none" stroke="#666" stroke-width="0.800"/><path d="M0.500 2.500H10.500" stroke="#666" stroke-width="1.400"/><circle cx="6.800" cy="6" r="1.900" fill="#666"/><circle cx="6.800" cy="6" r="0.700" fill="#f3f3f3"/><path d="M1.800 5h2.200M1.800 7h2.200" stroke="#666" stroke-width="0.700"/></svg>
<div class="abs" style="left:883.500px;top:583.600px;width:26.500px;height:14.500px;background:#c8c8c8"></div>
<svg style="left:891.800px;top:586.500px" width="9.500" height="8.500" viewBox="0 0 9.500 8.500"><rect x="0.400" y="0.400" width="8.700" height="7.700" fill="none" stroke="#555" stroke-width="0.800"/><path d="M0.500 3H9M0.500 5.600H9M3.300 0.500V8M6.200 0.500V8" stroke="#555" stroke-width="0.700"/></svg>
<svg style="left:919.700px;top:586.500px" width="9.500" height="8.500" viewBox="0 0 9.500 8.500"><rect x="0.400" y="0.400" width="8.700" height="7.700" fill="none" stroke="#666" stroke-width="0.800"/><rect x="2.400" y="2.200" width="4.700" height="4.100" fill="none" stroke="#666" stroke-width="0.700"/><path d="M3.500 3.600h2.500M3.500 5h2.500" stroke="#666" stroke-width="0.500"/></svg>
<svg style="left:947px;top:586.500px" width="9.500" height="8.500" viewBox="0 0 9.500 8.500"><rect x="0.400" y="0.400" width="8.700" height="7.700" fill="none" stroke="#666" stroke-width="0.800"/><path d="M0.500 5.300H6.300V0.500" fill="none" stroke="#666" stroke-width="0.800"/></svg>
<div class="abs" style="left:970px;top:590.600px;width:4.500px;height:0.800px;background:#666"></div>
<div class="abs" style="left:978.600px;top:590.700px;width:67.700px;height:0.600px;background:#9a9a9a"></div>
<div class="abs" style="left:1012.200px;top:586.800px;width:2.300px;height:8.300px;background:#666"></div>
<svg style="left:1050.300px;top:588.500px" width="5" height="5" viewBox="0 0 5 5"><path d="M2.500 0V5M0 2.500H5" stroke="#666" stroke-width="0.800"/></svg>
<div class="t" style="left:1065.200px;top:591.100px;font-size:6.700px;color:#555">100%</div>
</body></html>
